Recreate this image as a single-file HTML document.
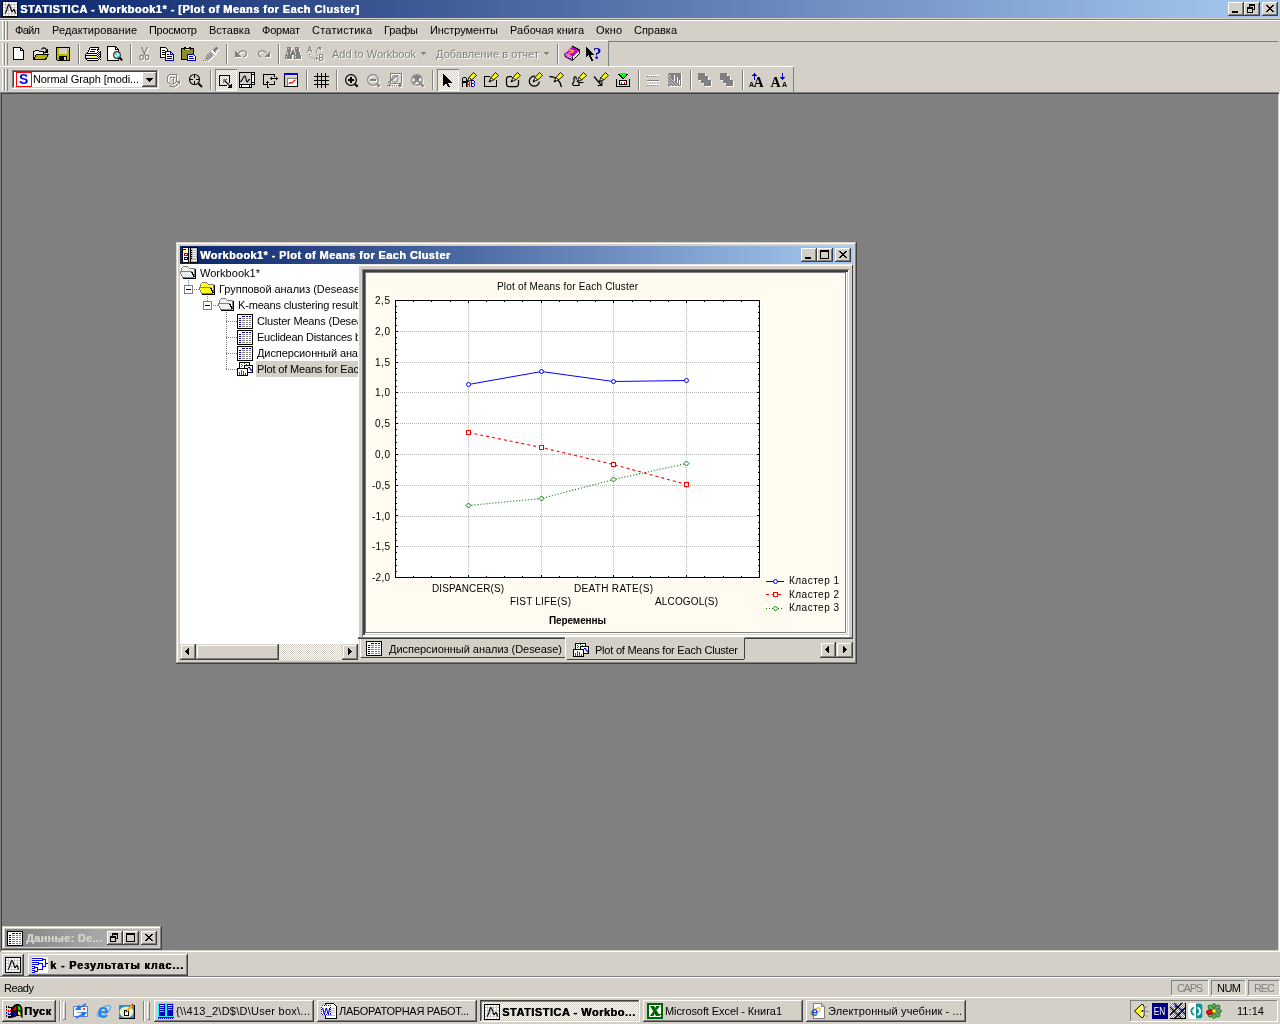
<!DOCTYPE html>
<html><head><meta charset="utf-8"><title>STATISTICA</title>
<style>
*{box-sizing:border-box;margin:0;padding:0}
html,body{width:1280px;height:1024px;overflow:hidden;background:#808080;font-family:"Liberation Sans",sans-serif;font-size:11px;color:#000}
.a{position:absolute}
.t{position:absolute;white-space:nowrap;will-change:transform}
.f{position:absolute;background:#d4d0c8}
.btn{position:absolute;background:#d4d0c8;box-shadow:inset -1px -1px #404040,inset 1px 1px #fff,inset -2px -2px #808080,inset 2px 2px #d4d0c8}
.pbtn{position:absolute;background:#fff;box-shadow:inset -1px -1px #fff,inset 1px 1px #404040,inset -2px -2px #d4d0c8,inset 2px 2px #808080}
.cb{position:absolute;background:#d4d0c8;box-shadow:inset -1px -1px #404040,inset 1px 1px #d4d0c8,inset -2px -2px #808080,inset 2px 2px #fff}
.sunk2{position:absolute;box-shadow:inset -1px -1px #fff,inset 1px 1px #808080,inset -2px -2px #d4d0c8,inset 2px 2px #404040}
.sunk1{position:absolute;box-shadow:inset -1px -1px #fff,inset 1px 1px #808080}
.rais1{position:absolute;box-shadow:inset -1px -1px #808080,inset 1px 1px #fff}
.sep{position:absolute;width:2px;border-left:1px solid #808080;border-right:1px solid #fff}
.grip{position:absolute;width:3px;border-left:1px solid #fff;border-right:1px solid #808080}
.chk{background-image:conic-gradient(#fff 25%,#d4d0c8 0 50%,#fff 0 75%,#d4d0c8 0);background-size:2px 2px}
svg{position:absolute;overflow:visible}
svg text{will-change:transform}
</style></head><body>
<svg style="left:0;top:0" width="0" height="0"><defs><pattern id="yd" width="2" height="2" patternUnits="userSpaceOnUse"><rect width="2" height="2" fill="#fff"/><rect width="1" height="1" fill="#ff0"/><rect x="1" y="1" width="1" height="1" fill="#ff0"/></pattern><pattern id="bw" width="2" height="2" patternUnits="userSpaceOnUse"><rect width="2" height="2" fill="#fff"/><rect width="1" height="1" fill="#000"/><rect x="1" y="1" width="1" height="1" fill="#000"/></pattern><pattern id="ckp" width="2" height="2" patternUnits="userSpaceOnUse"><rect width="1" height="1" fill="#808080"/><rect x="1" y="1" width="1" height="1" fill="#808080"/></pattern></defs></svg><div class="a" style="left:0px;top:0px;width:1280px;height:18px;background:linear-gradient(90deg,#0a246a,#a6caf0)"></div><svg style="left:2px;top:1px" width="16" height="16" viewBox="0 0 16 16" shape-rendering="crispEdges"><rect x="0" y="0" width="16" height="16" fill="#000"/><rect x="1" y="1" width="14" height="14" fill="#fff"/><rect x="1" y="3" width="14" height="1" fill="#c8c8c8"/><rect x="1" y="6" width="14" height="1" fill="#c8c8c8"/><rect x="1" y="9" width="14" height="1" fill="#c8c8c8"/><rect x="1" y="12" width="14" height="1" fill="#c8c8c8"/><rect x="3" y="1" width="1" height="14" fill="#c8c8c8"/><rect x="6" y="1" width="1" height="14" fill="#c8c8c8"/><rect x="9" y="1" width="1" height="14" fill="#c8c8c8"/><rect x="12" y="1" width="1" height="14" fill="#c8c8c8"/><g shape-rendering="auto"><path d="M3 12.5L4.5 10 6 4.5 7 3.5 8 5 9.5 10 10.5 10.5 11.5 8.5 12.5 9 13.5 12.5" stroke="#000" stroke-width="1.1" fill="none" /></g></svg><div class="t" style="left:20px;top:2px;font-size:11px;line-height:14px;height:14px;color:#fff;font-weight:bold;text-shadow:.45px 0 0 currentColor;letter-spacing:0.454px;">STATISTICA - Workbook1* - [Plot of Means for Each Cluster]</div><div class="btn" style="left:1228px;top:2px;width:16px;height:14px"><svg style="left:0;top:0" width="16" height="14" shape-rendering="crispEdges"><rect x="4" y="9" width="6" height="2"/></svg></div><div class="btn" style="left:1244px;top:2px;width:16px;height:14px"><svg style="left:0;top:0" width="16" height="14" shape-rendering="crispEdges"><path d="M5 2h6v6h-2v-1h1v-3h-4v1h-1z M3 5h6v6h-6z M4 7v3h4v-3z" fill-rule="evenodd"/></svg></div><div class="btn" style="left:1262px;top:2px;width:16px;height:14px"><svg style="left:0;top:0" width="16" height="14" shape-rendering="crispEdges"><path d="M4 3h2v1h1v1h2v-1h1v-1h2v1h-1v1h-1v1h-1v1h1v1h1v1h1v1h-2v-1h-1v-1h-2v1h-1v1h-2v-1h1v-1h1v-1h1v-1h-1v-1h-1v-1h-1z"/></svg></div><div class="f" style="left:0px;top:18px;width:1280px;height:74px;"></div><div class="a" style="left:0px;top:19px;width:1280px;height:1px;background:#808080"></div><div class="a" style="left:0px;top:20px;width:1280px;height:1px;background:#fff"></div><div class="grip" style="left:2px;top:21px;height:19px"></div><div class="grip" style="left:5px;top:21px;height:19px"></div><div class="t" style="left:15px;top:24px;font-size:11px;line-height:13px;height:13px;letter-spacing:-0.682px;">Файл</div><div class="t" style="left:52px;top:24px;font-size:11px;line-height:13px;height:13px;letter-spacing:0.093px;">Редактирование</div><div class="t" style="left:149px;top:24px;font-size:11px;line-height:13px;height:13px;letter-spacing:-0.321px;">Просмотр</div><div class="t" style="left:209px;top:24px;font-size:11px;line-height:13px;height:13px;letter-spacing:0.018px;">Вставка</div><div class="t" style="left:262px;top:24px;font-size:11px;line-height:13px;height:13px;letter-spacing:-0.216px;">Формат</div><div class="t" style="left:312px;top:24px;font-size:11px;line-height:13px;height:13px;letter-spacing:0.247px;">Статистика</div><div class="t" style="left:384px;top:24px;font-size:11px;line-height:13px;height:13px;letter-spacing:-0.133px;">Графы</div><div class="t" style="left:430px;top:24px;font-size:11px;line-height:13px;height:13px;letter-spacing:-0.059px;">Инструменты</div><div class="t" style="left:510px;top:24px;font-size:11px;line-height:13px;height:13px;letter-spacing:0.079px;">Рабочая книга</div><div class="t" style="left:596px;top:24px;font-size:11px;line-height:13px;height:13px;letter-spacing:0.146px;">Окно</div><div class="t" style="left:634px;top:24px;font-size:11px;line-height:13px;height:13px;letter-spacing:-0.026px;">Справка</div><div class="a" style="left:0px;top:40px;width:608px;height:1px;background:#fff"></div><div class="a" style="left:608px;top:41px;width:670px;height:1px;background:#808080"></div><div class="a" style="left:608px;top:41px;width:1px;height:25px;background:#808080"></div><div class="grip" style="left:2px;top:43px;height:22px"></div><div class="grip" style="left:5px;top:43px;height:22px"></div><svg style="left:11px;top:46px" width="16" height="16" viewBox="0 0 16 16" shape-rendering="crispEdges"><path d="M2.5 1.5H9.5L12.5 4.5V13.5H2.5Z" stroke="#000" stroke-width="1" fill="#fff" /><path d="M9.5 1.5V4.5H12.5" stroke="#000" stroke-width="1" fill="none" /></svg><svg style="left:33px;top:46px" width="16" height="16" viewBox="0 0 16 16" shape-rendering="crispEdges"><path d="M.5 13.5V5.5H1.5L2.5 4.5H5.5L6.5 5.5H10.5V8" stroke="#000" stroke-width="1" fill="url(#yd)" /><path d="M.5 13.5L3.5 8.5H15.5L12.5 13.5Z" stroke="#000" stroke-width="1" fill="#b4b400" /><g shape-rendering="auto"><path d="M8.5 3.5C9.5 1.300 12.500 1.300 13.500 4" stroke="#000" stroke-width="1.1" fill="none" /></g><path d="M15 2.500v4h-4z" fill="#000"/></svg><svg style="left:55px;top:46px" width="16" height="16" viewBox="0 0 16 16" shape-rendering="crispEdges"><rect x="1" y="1" width="14" height="14" fill="#000"/><rect x="2" y="2" width="12" height="12" fill="#b8b800"/><rect x="4" y="2" width="8" height="6" fill="#d4d0c8"/><rect x="4" y="10" width="8" height="4" fill="#000"/><rect x="9" y="11" width="2" height="3" fill="#d4d0c8"/><rect x="13" y="2" width="1" height="1" fill="#fff"/><rect x="1" y="14" width="1" height="1" fill="#d4d0c8"/></svg><div class="sep" style="left:78px;top:44px;height:20px"></div><svg style="left:85px;top:46px" width="16" height="16" viewBox="0 0 16 16" shape-rendering="crispEdges"><path d="M5 2h8l-1 5h-9z" fill="#fff"/><rect x="5" y="1" width="9" height="1" fill="#000"/><rect x="4" y="2" width="1" height="2" fill="#000"/><rect x="3" y="4" width="1" height="2" fill="#000"/><rect x="2" y="6" width="1" height="1" fill="#000"/><rect x="13" y="1" width="1" height="3" fill="#000"/><rect x="12" y="3" width="1" height="3" fill="#000"/><rect x="6" y="3" width="5" height="1" fill="#000"/><rect x="5" y="5" width="5" height="1" fill="#000"/><rect x="1" y="7" width="11" height="1" fill="#000"/><rect x="0" y="8" width="1" height="5" fill="#000"/><rect x="1" y="8" width="11" height="1" fill="#fff"/><rect x="1" y="9" width="11" height="1" fill="#000"/><rect x="1" y="10" width="11" height="2" fill="#eceae6"/><rect x="7" y="10" width="3" height="2" fill="#ff0"/><rect x="1" y="12" width="11" height="1" fill="#000"/><rect x="2" y="13" width="10" height="1" fill="#fff"/><rect x="1" y="13" width="1" height="1" fill="#000"/><rect x="2" y="14" width="10" height="1" fill="#000"/><rect x="12" y="5" width="4" height="9" fill="url(#bw)"/><rect x="12" y="14" width="1" height="1" fill="#000"/><rect x="15" y="6" width="1" height="6" fill="#000"/></svg><svg style="left:107px;top:46px" width="16" height="16" viewBox="0 0 16 16" shape-rendering="crispEdges"><path d="M.5 .5H8.5L11.5 3.5V14.5H.5Z" stroke="#000" stroke-width="1" fill="#fff" /><path d="M8.5 .5V3.5H11.5" stroke="#000" stroke-width="1" fill="none" /><g shape-rendering="auto"><circle cx="10" cy="9" r="3.300" fill="#ece4e4" stroke="#303030" stroke-width="1.200"/><path d="M12.500 11.500L15.200 14.400" stroke="#000" stroke-width="2" fill="none" /></g><rect x="8" y="7" width="2" height="2" fill="#0ff"/><rect x="10" y="10" width="2" height="1" fill="#0ff"/></svg><div class="sep" style="left:130px;top:44px;height:20px"></div><svg style="left:137px;top:46px" width="16" height="16" viewBox="0 0 16 16" shape-rendering="crispEdges"><g transform="translate(1,1)"><g shape-rendering="auto"><path d="M4.5 1L8.5 9.5M10.5 1L6.5 9.5" stroke="#fff" stroke-width="1.2" fill="none" /><ellipse cx="4.5" cy="11.5" rx="1.8" ry="2.2" fill="none" stroke="#fff" stroke-width="1.1"/><ellipse cx="10" cy="11.5" rx="1.8" ry="2.2" fill="none" stroke="#fff" stroke-width="1.1"/></g></g><g shape-rendering="auto"><path d="M4.5 1L8.5 9.5M10.5 1L6.5 9.5" stroke="#808080" stroke-width="1.2" fill="none" /><ellipse cx="4.5" cy="11.5" rx="1.8" ry="2.2" fill="none" stroke="#808080" stroke-width="1.1"/><ellipse cx="10" cy="11.5" rx="1.8" ry="2.2" fill="none" stroke="#808080" stroke-width="1.1"/></g></svg><svg style="left:159px;top:46px" width="16" height="16" viewBox="0 0 16 16" shape-rendering="crispEdges"><path d="M1.5 1.5H6.5L8.5 3.5V11.5H1.5Z" stroke="#000" stroke-width="1" fill="#fff" /><rect x="3" y="4" width="3" height="1" fill="#000"/><rect x="3" y="6" width="4" height="1" fill="#000"/><rect x="3" y="8" width="4" height="1" fill="#000"/><path d="M6.5 5.5H11.5L14.5 8.5V14.5H6.5Z" stroke="#0000c0" stroke-width="1" fill="#fff" /><path d="M11.5 5.5V8.5H14.5" stroke="#0000c0" stroke-width="1" fill="none" /><rect x="8" y="8" width="2" height="1" fill="#000"/><rect x="8" y="10" width="5" height="1" fill="#000"/><rect x="8" y="12" width="5" height="1" fill="#000"/></svg><svg style="left:181px;top:46px" width="16" height="16" viewBox="0 0 16 16" shape-rendering="crispEdges"><rect x="0" y="2" width="13" height="12" fill="#000"/><rect x="1" y="3" width="11" height="10" fill="#8c8c28"/><rect x="3" y="1" width="7" height="3" fill="#000"/><rect x="5" y="1" width="3" height="1" fill="#ff0"/><rect x="4" y="3" width="5" height="1" fill="#d4d0c8"/><path d="M6.5 8.5H12.5L14.5 10.5V14.5H6.5Z" stroke="#0000c0" stroke-width="1" fill="#fff" /><rect x="8" y="10" width="4" height="1" fill="#0000c0"/><rect x="8" y="12" width="5" height="1" fill="#0000c0"/></svg><svg style="left:203px;top:46px" width="16" height="16" viewBox="0 0 16 16" shape-rendering="crispEdges"><g transform="translate(1,1)"><g shape-rendering="auto"><path d="M14.5 1.5L11 5" stroke="#fff" stroke-width="3" fill="none" /><path d="M9.5 3.5l3.5 3.5-1.5 1.5-3.5-3.500z" fill="#fff"/><path d="M9.5 3.500l3.5 3.5" stroke="#fff" stroke-width="1" fill="none" /><path d="M7.5 5.500l3.5 3.5-5 5-1-1-3 1.5 1.5-3-1-1z" fill="#fff"/><path d="M5 8l3.5 3.500M6.5 6.500l3.5 3.500M3.5 9.500l3 3" stroke="#fff" stroke-width="0.7" fill="none" /></g><rect x="0" y="14" width="1" height="1" fill="#fff"/><rect x="2" y="14" width="1" height="1" fill="#fff"/><rect x="4" y="14" width="1" height="1" fill="#fff"/></g><g shape-rendering="auto"><path d="M14.5 1.5L11 5" stroke="#808080" stroke-width="3" fill="none" /><path d="M9.5 3.5l3.5 3.5-1.5 1.5-3.5-3.500z" fill="#fff"/><path d="M9.5 3.500l3.5 3.5" stroke="#808080" stroke-width="1" fill="none" /><path d="M7.5 5.500l3.5 3.5-5 5-1-1-3 1.5 1.5-3-1-1z" fill="#808080"/><path d="M5 8l3.5 3.500M6.5 6.500l3.5 3.500M3.5 9.500l3 3" stroke="#fff" stroke-width="0.7" fill="none" /></g><rect x="0" y="14" width="1" height="1" fill="#808080"/><rect x="2" y="14" width="1" height="1" fill="#808080"/><rect x="4" y="14" width="1" height="1" fill="#808080"/></svg><div class="sep" style="left:226px;top:44px;height:20px"></div><svg style="left:233px;top:46px" width="16" height="16" viewBox="0 0 16 16" shape-rendering="crispEdges"><g transform="translate(1,1)"><path d="M2 5v6h6z" fill="#fff"/><g shape-rendering="auto"><path d="M5.5 7.5C7 4.5 11 4 13 6 14.5 8 13 10.5 10.5 11" stroke="#fff" stroke-width="1.1" fill="none" /></g></g><path d="M2 5v6h6z" fill="#808080"/><g shape-rendering="auto"><path d="M5.5 7.5C7 4.5 11 4 13 6 14.5 8 13 10.5 10.5 11" stroke="#808080" stroke-width="1.1" fill="none" /></g></svg><svg style="left:255px;top:46px" width="16" height="16" viewBox="0 0 16 16" shape-rendering="crispEdges"><g transform="translate(1,1)"><path d="M15 5v6h-6z" fill="#fff"/><g shape-rendering="auto"><path d="M11.5 7.5C10 4.5 6 4 4 6 2.5 8 4 10.5 6.5 11" stroke="#fff" stroke-width="1.1" fill="none" /></g></g><path d="M15 5v6h-6z" fill="#808080"/><g shape-rendering="auto"><path d="M11.5 7.5C10 4.5 6 4 4 6 2.5 8 4 10.5 6.5 11" stroke="#808080" stroke-width="1.1" fill="none" /></g></svg><div class="sep" style="left:278px;top:44px;height:20px"></div><svg style="left:285px;top:46px" width="16" height="16" viewBox="0 0 16 16" shape-rendering="crispEdges"><g transform="translate(1,1)"><rect x="2" y="1" width="4" height="5" fill="#fff"/><rect x="1" y="6" width="6" height="3" fill="#fff"/><rect x="0" y="9" width="7" height="4" fill="#fff"/><rect x="10" y="1" width="4" height="5" fill="#fff"/><rect x="9" y="6" width="6" height="3" fill="#fff"/><rect x="9" y="9" width="7" height="4" fill="#fff"/><rect x="7" y="4" width="2" height="5" fill="#fff"/></g><rect x="2" y="1" width="4" height="5" fill="#808080"/><rect x="1" y="6" width="6" height="3" fill="#808080"/><rect x="0" y="9" width="7" height="4" fill="#808080"/><rect x="10" y="1" width="4" height="5" fill="#808080"/><rect x="9" y="6" width="6" height="3" fill="#808080"/><rect x="9" y="9" width="7" height="4" fill="#808080"/><rect x="7" y="4" width="2" height="5" fill="#808080"/><rect x="3" y="2" width="1" height="1" fill="#d4d0c8"/><rect x="11" y="2" width="1" height="1" fill="#d4d0c8"/><rect x="2" y="6" width="1" height="3" fill="#d4d0c8"/><rect x="10" y="6" width="1" height="3" fill="#d4d0c8"/><rect x="1" y="10" width="1" height="2" fill="#d4d0c8"/><rect x="10" y="10" width="1" height="2" fill="#d4d0c8"/><rect x="5" y="6" width="1" height="2" fill="#d4d0c8"/></svg><svg style="left:307px;top:46px" width="16" height="16" viewBox="0 0 16 16" shape-rendering="crispEdges"><g transform="translate(1,1)"><g shape-rendering="auto"><path d="M.5 6.5L2.7 .5 5 6.5M1.3 4.500h2.9" stroke="#fff" stroke-width="1" fill="none" /><path d="M12.5 8.5v6h2.200a1.4 1.4 0 000-3H12.500m2 0a1.3 1.3 0 000-3H12.5" stroke="#fff" stroke-width="1" fill="none" /><path d="M2.5 8C3 11.5 5.5 13 8 12.5" stroke="#fff" stroke-width="1.2" fill="none" stroke-dasharray="1 1.2"/><path d="M10.5 9.500C8.5 6.5 9.5 3.5 12 2" stroke="#fff" stroke-width="1.2" fill="none" stroke-dasharray="1 1.2"/></g><path d="M8.5 10l3 2.5-3 2.500z" fill="#fff"/><path d="M10 .5h4v4z" fill="#fff"/></g><g shape-rendering="auto"><path d="M.5 6.5L2.7 .5 5 6.5M1.3 4.500h2.9" stroke="#808080" stroke-width="1" fill="none" /><path d="M12.5 8.5v6h2.200a1.4 1.4 0 000-3H12.500m2 0a1.3 1.3 0 000-3H12.5" stroke="#808080" stroke-width="1" fill="none" /><path d="M2.5 8C3 11.5 5.5 13 8 12.5" stroke="#808080" stroke-width="1.2" fill="none" stroke-dasharray="1 1.2"/><path d="M10.5 9.500C8.5 6.5 9.5 3.5 12 2" stroke="#808080" stroke-width="1.2" fill="none" stroke-dasharray="1 1.2"/></g><path d="M8.5 10l3 2.5-3 2.500z" fill="#808080"/><path d="M10 .5h4v4z" fill="#808080"/></svg><div class="t" style="left:332px;top:48px;font-size:11px;line-height:13px;height:13px;color:#808080;letter-spacing:-0.013px;text-shadow:1px 1px #fff;">Add to Workbook</div><svg style="left:421px;top:52px" width="7" height="4" shape-rendering="crispEdges"><path d="M0 0h5l-2.5 3z" fill="#808080"/></svg><div class="t" style="left:436px;top:48px;font-size:11px;line-height:13px;height:13px;color:#808080;letter-spacing:0.075px;text-shadow:1px 1px #fff;">Добавление в отчет</div><svg style="left:544px;top:52px" width="7" height="4" shape-rendering="crispEdges"><path d="M0 0h5l-2.5 3z" fill="#808080"/></svg><div class="sep" style="left:557px;top:44px;height:20px"></div><svg style="left:564px;top:46px" width="16" height="16" viewBox="0 0 16 16" shape-rendering="crispEdges"><g shape-rendering="auto"><path d="M1 7L8.400 10.600V14.500L1 10.500z" fill="#fff"/><path d="M1 8.200l7.400 3.600M1 9.800l7.400 3.600" stroke="#d000d0" stroke-width="0.9" fill="none" /><path d="M8.400 10.600L15.500 4V7.500L8.400 14.500z" stroke="#000" stroke-width="1" fill="#fff" /><path d="M1 7v3.500l7.400 4" stroke="#000" stroke-width="1" fill="none" /><path d="M8 0L15.500 4 8.400 10.600 1 7z" fill="#d000d0"/><path d="M8 0L15.500 4" stroke="#000" stroke-width="1.3" fill="none" /><path d="M1.800 6.300L8 .8" stroke="#fff" stroke-width="1" fill="none" stroke-dasharray="1 .7"/></g><text x="6.200" y="9.500" font-family="Liberation Sans" font-weight="bold" font-size="9" fill="#ff0" shape-rendering="auto" transform="rotate(20 8 6) skewX(-20)">?</text></svg><svg style="left:586px;top:46px" width="16" height="16" viewBox="0 0 16 16" shape-rendering="crispEdges"><path d="M0 1v10.500l2.500-2.500 2.500 5.500h2l-2.500-5.500h3.500z" fill="#000"/><text x="7" y="13" font-family="Liberation Serif" font-weight="bold" font-size="17" fill="#0000c0" shape-rendering="auto">?</text></svg><div class="a" style="left:0px;top:66px;width:794px;height:1px;background:#fff"></div><div class="a" style="left:793px;top:67px;width:1px;height:25px;background:#808080"></div><div class="grip" style="left:2px;top:69px;height:22px"></div><div class="grip" style="left:5px;top:69px;height:22px"></div><div class="sunk2" style="left:12px;top:70px;width:147px;height:19px;background:#fff"></div><div class="a" style="left:16px;top:72px;width:16px;height:15px;border:1px solid #f00;background:#fff"></div><div class="t" style="left:19px;top:71px;font-size:14px;line-height:16px;height:16px;color:#00f;font-weight:bold;letter-spacing:-0.344px;/*nosh*/">S</div><div class="t" style="left:33px;top:73px;font-size:11px;line-height:13px;height:13px;letter-spacing:-0.110px;">Normal Graph [modi...</div><div class="btn" style="left:142px;top:72px;width:15px;height:15px;"></div><svg style="left:146px;top:78px" width="7" height="4" shape-rendering="crispEdges"><path d="M0 0h7l-3.5 4z" fill="#000"/></svg><svg style="left:165px;top:72px" width="16" height="16" viewBox="0 0 16 16" shape-rendering="crispEdges"><g transform="translate(1,1)"><path d="M4 2.5h8M2.5 3.5v6.5M11.5 3v6.5M2.5 3.5h1.5M5 5.5h2M7.5 5.5h2M8.5 6v6" stroke="#fff" stroke-width="1" fill="none" /><g shape-rendering="auto"><path d="M2.5 10l5 3M11.5 9.5l-3 3" stroke="#fff" stroke-width="1" fill="none" /><path d="M4.5 13.5c3 2.5 6.5 1.5 8.5-2" stroke="#fff" stroke-width="1.1" fill="none" /></g><path d="M11 9h3.500v3.500z" fill="#fff"/></g><path d="M4 2.5h8M2.5 3.5v6.5M11.5 3v6.5M2.5 3.5h1.5M5 5.5h2M7.5 5.5h2M8.5 6v6" stroke="#808080" stroke-width="1" fill="none" /><g shape-rendering="auto"><path d="M2.5 10l5 3M11.5 9.5l-3 3" stroke="#808080" stroke-width="1" fill="none" /><path d="M4.5 13.5c3 2.5 6.5 1.5 8.5-2" stroke="#808080" stroke-width="1.1" fill="none" /></g><path d="M11 9h3.500v3.500z" fill="#808080"/></svg><svg style="left:187px;top:72px" width="16" height="16" viewBox="0 0 16 16" shape-rendering="crispEdges"><g shape-rendering="auto"><circle cx="7.5" cy="7.5" r="5" fill="none" stroke="#000" stroke-width="1.1"/><path d="M11.5 11.500L15 15" stroke="#000" stroke-width="1.9" fill="none" /></g><rect x="7" y="2" width="1" height="4" fill="#000"/><rect x="7" y="9" width="1" height="4" fill="#000"/><rect x="2" y="7" width="4" height="1" fill="#000"/><rect x="9" y="7" width="4" height="1" fill="#000"/></svg><div class="sep" style="left:210px;top:70px;height:20px"></div><div class="a chk" style="left:215px;top:69px;width:22px;height:22px;box-shadow:inset 1px 1px #808080,inset -1px -1px #fff"></div><svg style="left:218px;top:73px" width="16" height="16" viewBox="0 0 16 16" shape-rendering="crispEdges"><rect x="1" y="2" width="11" height="1" fill="#000"/><rect x="1" y="2" width="1" height="11" fill="#000"/><rect x="1" y="12" width="8" height="1" fill="#000"/><rect x="11" y="2" width="1" height="8" fill="#000"/><path d="M5 6h4l-4 4z" fill="#808080"/><g shape-rendering="auto"><path d="M7 8l5 5" stroke="#000" stroke-width="1.1" fill="none" /></g><path d="M14 15h-5l5-5z" fill="#000"/></svg><svg style="left:239px;top:72px" width="16" height="16" viewBox="0 0 16 16" shape-rendering="crispEdges"><rect x="0" y="0" width="13" height="16" fill="#000"/><rect x="12" y="0" width="4" height="13" fill="#000"/><rect x="1" y="1" width="11" height="11" fill="#d4d0c8"/><rect x="13" y="1" width="2" height="1" fill="#fff"/><rect x="13" y="3" width="2" height="7" fill="#fff"/><rect x="13" y="11" width="2" height="1" fill="#fff"/><rect x="1" y="13" width="1" height="2" fill="#fff"/><rect x="3" y="13" width="7" height="2" fill="#fff"/><rect x="11" y="13" width="1" height="2" fill="#fff"/><g shape-rendering="auto"><path d="M1 9.5L2.5 9 4.5 5 5.5 4 6.500 4.500 7.500 9.500 8.500 10 9.500 8 11 7.500" stroke="#000" stroke-width="1.1" fill="none" /></g></svg><svg style="left:261px;top:72px" width="16" height="16" viewBox="0 0 16 16" shape-rendering="crispEdges"><path d="M11 2.5h-8.500v10h3M8 12.500h5.500v-4M13.5 5v-2.500h-2.5" stroke="#000" stroke-width="1.2" fill="none" /><path d="M10 6.500h6M6.5 10v6" stroke="#000" stroke-width="1" fill="none" /><path d="M9 6.500l2-2v4zM16.5 6.500l-2-2v4zM6.5 9l-2 2h4zM6.5 16.500l-2-2h4z" fill="#000"/></svg><svg style="left:283px;top:72px" width="16" height="16" viewBox="0 0 16 16" shape-rendering="crispEdges"><rect x="1" y="1" width="14" height="14" fill="#000"/><rect x="1" y="1" width="14" height="2" fill="#00f"/><rect x="2" y="3" width="12" height="11" fill="#d4d0c8"/><rect x="2" y="3" width="12" height="1" fill="#f4f0dc"/><rect x="4" y="6" width="10" height="1" fill="#808080"/><rect x="4" y="6" width="1" height="8" fill="#808080"/><rect x="5" y="7" width="9" height="7" fill="#fff"/><g shape-rendering="auto"><path d="M6 12c1-2.5 1.5-1 3-1.200s1.5-2.5 3.5-3" stroke="#f00" stroke-width="1.3" fill="none" /></g></svg><div class="sep" style="left:306px;top:70px;height:20px"></div><svg style="left:313px;top:72px" width="16" height="16" viewBox="0 0 16 16" shape-rendering="crispEdges"><rect x="4" y="1" width="1" height="15" fill="#000"/><rect x="8" y="1" width="1" height="15" fill="#000"/><rect x="12" y="1" width="1" height="15" fill="#000"/><rect x="1" y="4" width="15" height="1" fill="#000"/><rect x="1" y="8" width="15" height="1" fill="#000"/><rect x="1" y="12" width="15" height="1" fill="#000"/></svg><div class="sep" style="left:336px;top:70px;height:20px"></div><svg style="left:343px;top:72px" width="16" height="16" viewBox="0 0 16 16" shape-rendering="crispEdges"><g shape-rendering="auto"><circle cx="8" cy="8" r="5.4" fill="none" stroke="#000" stroke-width="1.2"/><path d="M12 12l2.6 2.600" stroke="#000" stroke-width="2.2" fill="none" /></g><rect x="5" y="7" width="6" height="2" fill="#000"/><rect x="7" y="5" width="2" height="6" fill="#000"/></svg><svg style="left:365px;top:72px" width="16" height="16" viewBox="0 0 16 16" shape-rendering="crispEdges"><g transform="translate(1,1)"><g shape-rendering="auto"><circle cx="8" cy="8" r="5.4" fill="none" stroke="#fff" stroke-width="1.2"/><path d="M12 12l2.6 2.600" stroke="#fff" stroke-width="2.2" fill="none" /></g><rect x="5" y="7" width="6" height="2" fill="#fff"/></g><g shape-rendering="auto"><circle cx="8" cy="8" r="5.4" fill="none" stroke="#808080" stroke-width="1.2"/><path d="M12 12l2.6 2.600" stroke="#808080" stroke-width="2.2" fill="none" /></g><rect x="5" y="7" width="6" height="2" fill="#808080"/></svg><svg style="left:387px;top:72px" width="16" height="16" viewBox="0 0 16 16" shape-rendering="crispEdges"><g transform="translate(1,1)"><path d="M3.5 1.5h11v10h-11z" stroke="#fff" stroke-width="1" fill="none" /><g shape-rendering="auto"><path d="M1 11L11 3" stroke="#fff" stroke-width="1.2" fill="none" /><circle cx="8" cy="7" r="3.3" fill="none" stroke="#fff"/></g><path d="M1 13.5h12" stroke="#fff" stroke-width="1" fill="none" stroke-dasharray="1 1"/><path d="M0 13.5l3-2v4z" fill="#fff"/><path d="M15 13.5l-3-2v4z" fill="#fff"/></g><path d="M3.5 1.5h11v10h-11z" stroke="#808080" stroke-width="1" fill="none" /><g shape-rendering="auto"><path d="M1 11L11 3" stroke="#808080" stroke-width="1.2" fill="none" /><circle cx="8" cy="7" r="3.3" fill="none" stroke="#808080"/></g><path d="M1 13.5h12" stroke="#808080" stroke-width="1" fill="none" stroke-dasharray="1 1"/><path d="M0 13.5l3-2v4z" fill="#808080"/><path d="M15 13.5l-3-2v4z" fill="#808080"/></svg><svg style="left:409px;top:72px" width="16" height="16" viewBox="0 0 16 16" shape-rendering="crispEdges"><g transform="translate(1,1)"><g shape-rendering="auto"><circle cx="8" cy="8" r="5.4" fill="none" stroke="#fff" stroke-width="1.2"/><path d="M12 12l2.6 2.600" stroke="#fff" stroke-width="2.2" fill="none" /></g><g shape-rendering="auto"><path d="M4.5 4.500l7 7M11.500 4.500l-7 7" stroke="#fff" stroke-width="1.8" fill="none" /><path d="M4.500 5l3.500-2.200 3.500 2.200-3.500 3z" fill="#fff"/></g></g><g shape-rendering="auto"><circle cx="8" cy="8" r="5.4" fill="none" stroke="#808080" stroke-width="1.2"/><path d="M12 12l2.6 2.600" stroke="#808080" stroke-width="2.2" fill="none" /></g><g shape-rendering="auto"><path d="M4.5 4.500l7 7M11.500 4.500l-7 7" stroke="#808080" stroke-width="1.8" fill="none" /><path d="M4.500 5l3.500-2.200 3.500 2.200-3.500 3z" fill="#808080"/></g></svg><div class="sep" style="left:432px;top:70px;height:20px"></div><div class="a chk" style="left:437px;top:69px;width:22px;height:22px;box-shadow:inset 1px 1px #808080,inset -1px -1px #fff"></div><svg style="left:440px;top:73px" width="16" height="16" viewBox="0 0 16 16" shape-rendering="crispEdges"><path d="M3 1v12l3-3 2 4.500 1.800-.8-2-4.200h4z" fill="#000"/></svg><svg style="left:461px;top:72px" width="16" height="16" viewBox="0 0 16 16" shape-rendering="crispEdges"><path d="M1.5 15V6.5L2.5 5.5h2L5.5 6.5V15" stroke="#000" stroke-width="1" fill="none" /><rect x="2" y="9" width="3" height="2" fill="#000"/><rect x="1" y="6" width="1" height="9" fill="#000"/><rect x="5" y="6" width="1" height="9" fill="#000"/><path d="M6.5 10v5M8.5 10v5" stroke="#f00" stroke-width="1" fill="none" /><rect x="7" y="12" width="1" height="1" fill="#f00"/><rect x="10" y="8" width="1" height="7" fill="#00f"/><rect x="11" y="8" width="2" height="1" fill="#00f"/><rect x="11" y="11" width="2" height="1" fill="#00f"/><rect x="11" y="14" width="2" height="1" fill="#00f"/><rect x="13" y="9" width="1" height="2" fill="#00f"/><rect x="13" y="12" width="1" height="2" fill="#00f"/><rect x="11" y="9" width="2" height="2" fill="#ffc"/><rect x="11" y="12" width="2" height="2" fill="#ffc"/><g shape-rendering="auto"><path d="M12.5 .5l3 3-5 4.5-2.5-2.5z" stroke="#000" stroke-width="0.9" fill="#ff0" /><path d="M8 5.5l2.5 2.5-3.2 1.3-.6-.6z" stroke="#000" stroke-width="0.9" fill="#fff" /><path d="M7.6 8.4l-1.6 1.6" stroke="#000" stroke-width="1.5" fill="none" /></g></svg><svg style="left:483px;top:72px" width="16" height="16" viewBox="0 0 16 16" shape-rendering="crispEdges"><path d="M7 4.5h-5.5v10h12v-7" stroke="#000" stroke-width="1.2" fill="none" /><g shape-rendering="auto"><path d="M12.5 .5l3 3-5 4.5-2.5-2.5z" stroke="#000" stroke-width="0.9" fill="#ff0" /><path d="M8 5.5l2.5 2.5-3.2 1.3-.6-.6z" stroke="#000" stroke-width="0.9" fill="#fff" /><path d="M7.6 8.4l-1.6 1.6" stroke="#000" stroke-width="1.5" fill="none" /></g></svg><svg style="left:505px;top:72px" width="16" height="16" viewBox="0 0 16 16" shape-rendering="crispEdges"><g shape-rendering="auto"><path d="M7 4.5H4a2.5 2.5 0 00-2.5 2.5v5a2.5 2.5 0 002.5 2.5h7a2.5 2.5 0 002.5-2.5V8" stroke="#000" stroke-width="1.25" fill="none" /></g><g shape-rendering="auto"><path d="M12.5 .5l3 3-5 4.5-2.5-2.5z" stroke="#000" stroke-width="0.9" fill="#ff0" /><path d="M8 5.5l2.5 2.5-3.2 1.3-.6-.6z" stroke="#000" stroke-width="0.9" fill="#fff" /><path d="M7.6 8.4l-1.6 1.6" stroke="#000" stroke-width="1.5" fill="none" /></g></svg><svg style="left:527px;top:72px" width="16" height="16" viewBox="0 0 16 16" shape-rendering="crispEdges"><g shape-rendering="auto"><path d="M8 4.2A5 5 0 1012.3 9.5" stroke="#000" stroke-width="1.3" fill="none" /></g><g shape-rendering="auto"><path d="M12.5 .5l3 3-5 4.5-2.5-2.5z" stroke="#000" stroke-width="0.9" fill="#ff0" /><path d="M8 5.5l2.5 2.5-3.2 1.3-.6-.6z" stroke="#000" stroke-width="0.9" fill="#fff" /><path d="M7.6 8.4l-1.6 1.6" stroke="#000" stroke-width="1.5" fill="none" /></g></svg><svg style="left:549px;top:72px" width="16" height="16" viewBox="0 0 16 16" shape-rendering="crispEdges"><g shape-rendering="auto"><path d="M.5 4.500C6 4.5 11 8 12.5 15" stroke="#000" stroke-width="1.4" fill="none" /></g><g transform="translate(-1,0)"><g shape-rendering="auto"><path d="M12.5 .5l3 3-5 4.5-2.5-2.5z" stroke="#000" stroke-width="0.9" fill="#ff0" /><path d="M8 5.5l2.5 2.5-3.2 1.3-.6-.6z" stroke="#000" stroke-width="0.9" fill="#fff" /><path d="M7.6 8.4l-1.6 1.6" stroke="#000" stroke-width="1.5" fill="none" /></g></g></svg><svg style="left:571px;top:72px" width="16" height="16" viewBox="0 0 16 16" shape-rendering="crispEdges"><g shape-rendering="auto"><path d="M12.5 10.500H8v3H2.500c-2-1 0-3 .5-4 1-1.5-1.5-3 .5-4.5 2-.8 2 1.5 1.5 2.5" stroke="#000" stroke-width="1.2" fill="none" /></g><g shape-rendering="auto"><path d="M12.5 .5l3 3-5 4.5-2.5-2.5z" stroke="#000" stroke-width="0.9" fill="#ff0" /><path d="M8 5.5l2.5 2.5-3.2 1.3-.6-.6z" stroke="#000" stroke-width="0.9" fill="#fff" /><path d="M7.6 8.4l-1.6 1.6" stroke="#000" stroke-width="1.5" fill="none" /></g></svg><svg style="left:593px;top:72px" width="16" height="16" viewBox="0 0 16 16" shape-rendering="crispEdges"><g shape-rendering="auto"><path d="M1 4.500L8.500 13.500" stroke="#000" stroke-width="1.2" fill="none" /><path d="M4.500 13.500h4.300v-4.300" stroke="#000" stroke-width="1.2" fill="none" /></g><g shape-rendering="auto"><path d="M12.5 .5l3 3-5 4.5-2.5-2.5z" stroke="#000" stroke-width="0.9" fill="#ff0" /><path d="M8 5.5l2.5 2.5-3.2 1.3-.6-.6z" stroke="#000" stroke-width="0.9" fill="#fff" /><path d="M7.6 8.4l-1.6 1.6" stroke="#000" stroke-width="1.5" fill="none" /></g></svg><svg style="left:615px;top:72px" width="16" height="16" viewBox="0 0 16 16" shape-rendering="crispEdges"><path d="M2 2h12l-6 5z" fill="#000"/><path d="M5 1h6v2l-3 3-3-3z" fill="#0f0"/><path d="M1.5 6.500v8h13v-8" stroke="#000" stroke-width="1.6" fill="none" /><rect x="4" y="8" width="8" height="5" fill="#000"/><rect x="5" y="9" width="6" height="3" fill="#fff"/><rect x="6" y="10" width="1" height="2" fill="#f00"/><rect x="9" y="10" width="1" height="2" fill="#f00"/></svg><div class="sep" style="left:638px;top:70px;height:20px"></div><svg style="left:645px;top:72px" width="16" height="16" viewBox="0 0 16 16" shape-rendering="crispEdges"><rect x="2" y="3" width="12" height="1" fill="#fff"/><path d="M2 4.500h12" stroke="#808080" stroke-width="1" fill="none" stroke-dasharray="1 1"/><rect x="2" y="8" width="12" height="1" fill="#808080"/><rect x="2" y="9" width="12" height="1" fill="#fff"/><rect x="2" y="12" width="12" height="1" fill="#fff"/><path d="M2 13.500h12" stroke="#808080" stroke-width="1" fill="none" stroke-dasharray="1 1"/></svg><svg style="left:667px;top:72px" width="16" height="16" viewBox="0 0 16 16" shape-rendering="crispEdges"><rect x="1" y="1" width="13" height="13" fill="#808080"/><g shape-rendering="auto"><path d="M1 4l10 10M1 7l7 7M1 10l4 4M1 1.500l3 3" stroke="#d4d0c8" stroke-width="1" fill="none" /></g><rect x="7" y="3" width="1" height="6" fill="#fff"/><rect x="10" y="5" width="1" height="6" fill="#fff"/><rect x="12" y="8" width="1" height="5" fill="#fff"/><rect x="14" y="2" width="1" height="13" fill="#fff"/><rect x="2" y="14" width="13" height="1" fill="#fff"/></svg><div class="sep" style="left:690px;top:70px;height:20px"></div><svg style="left:697px;top:72px" width="16" height="16" viewBox="0 0 16 16" shape-rendering="crispEdges"><g transform="translate(1,1)"><path d="M1 1h7v3h3v4h3v6h-7v-3h-3v-3h-3z" fill="#fff"/></g><path d="M1 1h7v3h3v4h3v6h-7v-3h-3v-3h-3z" fill="#808080"/></svg><svg style="left:719px;top:72px" width="16" height="16" viewBox="0 0 16 16" shape-rendering="crispEdges"><g transform="translate(1,1)"><path d="M1 1h7v3h3v4h3v6h-7v-3h-3v-3h-3z" fill="#fff"/></g><path d="M1 1h7v3h3v4h3v6h-7v-3h-3v-3h-3z" fill="#808080"/></svg><div class="sep" style="left:742px;top:70px;height:20px"></div><svg style="left:749px;top:72px" width="16" height="16" viewBox="0 0 16 16" shape-rendering="crispEdges"><text x="0" y="15" font-family="Liberation Sans" font-weight="bold" font-size="7" shape-rendering="auto">A</text><text x="4.5" y="15" font-family="Liberation Serif" font-weight="bold" font-size="14" shape-rendering="auto">A</text><rect x="5" y="2" width="1" height="6" fill="#00f"/><path d="M2.5 4l3-3.5 3 3.500z" fill="#00f"/></svg><svg style="left:771px;top:72px" width="16" height="16" viewBox="0 0 16 16" shape-rendering="crispEdges"><text x="-.5" y="15" font-family="Liberation Serif" font-weight="bold" font-size="14" shape-rendering="auto">A</text><text x="11" y="15" font-family="Liberation Sans" font-weight="bold" font-size="7" shape-rendering="auto">A</text><rect x="11" y="1" width="1" height="6" fill="#00f"/><path d="M8.5 5l3 3.5 3-3.500z" fill="#00f"/></svg><div class="a" style="left:0px;top:92px;width:1280px;height:1px;background:#808080"></div><div class="a" style="left:0px;top:93px;width:1280px;height:1px;background:#404040"></div><div class="a" style="left:0px;top:92px;width:1px;height:858px;background:#808080"></div><div class="a" style="left:1px;top:93px;width:1px;height:857px;background:#404040"></div><div class="a" style="left:1278px;top:94px;width:1px;height:856px;background:#d4d0c8"></div><div class="a" style="left:1279px;top:92px;width:1px;height:860px;background:#fff"></div><div class="a" style="left:2px;top:950px;width:1277px;height:1px;background:#d4d0c8"></div><div class="a" style="left:1px;top:951px;width:1279px;height:1px;background:#fff"></div><div class="f" style="left:176px;top:242px;width:681px;height:422px;box-shadow:inset -1px -1px #404040,inset 1px 1px #d4d0c8,inset -2px -2px #808080,inset 2px 2px #fff"></div><div class="a" style="left:180px;top:246px;width:673px;height:18px;background:linear-gradient(90deg,#0a246a,#a6caf0)"></div><svg style="left:182px;top:247px" width="16" height="16" viewBox="0 0 16 16" shape-rendering="crispEdges"><rect x="0" y="0" width="7" height="16" fill="#000"/><rect x="1" y="1" width="5" height="14" fill="#fff"/><rect x="1" y="3" width="3" height="1" fill="#ff0"/><rect x="1" y="2" width="3" height="1" fill="#000"/><path d="M2.5 6.500h3v2h-3z" stroke="#c00000" stroke-width="1" fill="none" /><path d="M2.5 10.500h3v2h-3z" stroke="#0000c0" stroke-width="1" fill="none" /><rect x="8" y="0" width="8" height="16" fill="#000"/><rect x="9" y="1" width="6" height="14" fill="#c0c0c0"/><rect x="11" y="2" width="3" height="1" fill="#fff"/><rect x="11" y="4" width="3" height="1" fill="#fff"/><rect x="11" y="6" width="3" height="1" fill="#fff"/><rect x="11" y="8" width="3" height="1" fill="#fff"/><rect x="11" y="10" width="3" height="1" fill="#fff"/><rect x="9" y="3" width="1" height="1" fill="#000"/><rect x="9" y="5" width="1" height="1" fill="#000"/><rect x="9" y="7" width="1" height="1" fill="#000"/><rect x="9" y="9" width="1" height="1" fill="#000"/><rect x="9" y="11" width="1" height="1" fill="#000"/><rect x="11" y="13" width="4" height="1" fill="#fff"/><rect x="7" y="1" width="1" height="14" fill="#d4d0c8"/></svg><div class="t" style="left:200px;top:248px;font-size:11px;line-height:14px;height:14px;color:#fff;font-weight:bold;text-shadow:.45px 0 0 currentColor;letter-spacing:0.398px;">Workbook1* - Plot of Means for Each Cluster</div><div class="btn" style="left:801px;top:248px;width:16px;height:14px"><svg style="left:0;top:0" width="16" height="14" shape-rendering="crispEdges"><rect x="4" y="9" width="6" height="2"/></svg></div><div class="btn" style="left:817px;top:248px;width:16px;height:14px"><svg style="left:0;top:0" width="16" height="14" shape-rendering="crispEdges"><path d="M3 2h9v9h-9z M4 4v6h7v-6z" fill-rule="evenodd"/></svg></div><div class="btn" style="left:835px;top:248px;width:16px;height:14px"><svg style="left:0;top:0" width="16" height="14" shape-rendering="crispEdges"><path d="M4 3h2v1h1v1h2v-1h1v-1h2v1h-1v1h-1v1h-1v1h1v1h1v1h1v1h-2v-1h-1v-1h-2v1h-1v1h-2v-1h1v-1h1v-1h1v-1h-1v-1h-1v-1h-1z"/></svg></div><div class="a" style="left:180px;top:264px;width:179px;height:380px;background:#fff;overflow:hidden"></div><div class="f" style="left:256px;top:361px;width:102px;height:16px;"></div><div class="a" style="left:188px;top:280px;width:1px;height:6px;background:repeating-linear-gradient(180deg,#808080 0 1px,transparent 1px 2px)"></div><div class="a" style="left:194px;top:289px;width:6px;height:1px;background:repeating-linear-gradient(90deg,#808080 0 1px,transparent 1px 2px)"></div><div class="a" style="left:207px;top:296px;width:1px;height:6px;background:repeating-linear-gradient(180deg,#808080 0 1px,transparent 1px 2px)"></div><div class="a" style="left:213px;top:305px;width:6px;height:1px;background:repeating-linear-gradient(90deg,#808080 0 1px,transparent 1px 2px)"></div><div class="a" style="left:226px;top:312px;width:1px;height:58px;background:repeating-linear-gradient(180deg,#808080 0 1px,transparent 1px 2px)"></div><div class="a" style="left:226px;top:321px;width:12px;height:1px;background:repeating-linear-gradient(90deg,#808080 0 1px,transparent 1px 2px)"></div><div class="a" style="left:226px;top:337px;width:12px;height:1px;background:repeating-linear-gradient(90deg,#808080 0 1px,transparent 1px 2px)"></div><div class="a" style="left:226px;top:353px;width:12px;height:1px;background:repeating-linear-gradient(90deg,#808080 0 1px,transparent 1px 2px)"></div><div class="a" style="left:226px;top:369px;width:12px;height:1px;background:repeating-linear-gradient(90deg,#808080 0 1px,transparent 1px 2px)"></div><div class="a" style="left:184px;top:285px;width:9px;height:9px;border:1px solid #808080;background:#fff"><div class="a" style="left:1px;top:3px;width:5px;height:1px;background:#000"></div></div><div class="a" style="left:203px;top:301px;width:9px;height:9px;border:1px solid #808080;background:#fff"><div class="a" style="left:1px;top:3px;width:5px;height:1px;background:#000"></div></div><svg style="left:180px;top:265px" width="16" height="16" viewBox="0 0 16 16" shape-rendering="crispEdges"><path d="M2 3h1v-1h5v1h1v1h5v3h-12z" fill="url(#yd)"/><path d="M1 7h11l2 5h-11l-2-3z" fill="url(#yd)"/><rect x="3" y="1" width="5" height="1" fill="#808080"/><rect x="2" y="2" width="1" height="1" fill="#808080"/><rect x="8" y="2" width="1" height="1" fill="#808080"/><rect x="1" y="3" width="1" height="4" fill="#808080"/><rect x="9" y="3" width="6" height="1" fill="#808080"/><rect x="14" y="4" width="1" height="7" fill="#808080"/><rect x="15" y="4" width="1" height="10" fill="#000"/><rect x="3" y="13" width="13" height="1" fill="#000"/><rect x="0" y="6" width="12" height="1" fill="#808080"/><rect x="0" y="7" width="1" height="2" fill="#808080"/><rect x="1" y="9" width="1" height="2" fill="#808080"/><rect x="2" y="11" width="1" height="2" fill="#808080"/><rect x="3" y="12" width="11" height="1" fill="#808080"/><rect x="11" y="7" width="2" height="1" fill="#000"/><rect x="12" y="8" width="1" height="1" fill="#000"/><rect x="12" y="9" width="2" height="1" fill="#000"/><rect x="13" y="10" width="1" height="1" fill="#000"/><rect x="13" y="11" width="2" height="1" fill="#000"/></svg><svg style="left:199px;top:281px" width="16" height="16" viewBox="0 0 16 16" shape-rendering="crispEdges"><path d="M2 3h1v-1h5v1h1v1h5v3h-12z" fill="url(#yd)"/><path d="M1 7h11l2 5h-11l-2-3z" fill="url(#yd)"/><rect x="3" y="1" width="5" height="1" fill="#808080"/><rect x="2" y="2" width="1" height="1" fill="#808080"/><rect x="8" y="2" width="1" height="1" fill="#808080"/><rect x="1" y="3" width="1" height="4" fill="#808080"/><rect x="9" y="3" width="6" height="1" fill="#808080"/><rect x="14" y="4" width="1" height="7" fill="#808080"/><rect x="15" y="4" width="1" height="10" fill="#000"/><rect x="3" y="13" width="13" height="1" fill="#000"/><rect x="0" y="6" width="12" height="1" fill="#808080"/><rect x="0" y="7" width="1" height="2" fill="#808080"/><rect x="1" y="9" width="1" height="2" fill="#808080"/><rect x="2" y="11" width="1" height="2" fill="#808080"/><rect x="3" y="12" width="11" height="1" fill="#808080"/><rect x="11" y="7" width="2" height="1" fill="#000"/><rect x="12" y="8" width="1" height="1" fill="#000"/><rect x="12" y="9" width="2" height="1" fill="#000"/><rect x="13" y="10" width="1" height="1" fill="#000"/><rect x="13" y="11" width="2" height="1" fill="#000"/></svg><svg style="left:218px;top:297px" width="16" height="16" viewBox="0 0 16 16" shape-rendering="crispEdges"><path d="M2 3h1v-1h5v1h1v1h5v3h-12z" fill="url(#yd)"/><path d="M1 7h11l2 5h-11l-2-3z" fill="url(#yd)"/><rect x="3" y="1" width="5" height="1" fill="#808080"/><rect x="2" y="2" width="1" height="1" fill="#808080"/><rect x="8" y="2" width="1" height="1" fill="#808080"/><rect x="1" y="3" width="1" height="4" fill="#808080"/><rect x="9" y="3" width="6" height="1" fill="#808080"/><rect x="14" y="4" width="1" height="7" fill="#808080"/><rect x="15" y="4" width="1" height="10" fill="#000"/><rect x="3" y="13" width="13" height="1" fill="#000"/><rect x="0" y="6" width="12" height="1" fill="#808080"/><rect x="0" y="7" width="1" height="2" fill="#808080"/><rect x="1" y="9" width="1" height="2" fill="#808080"/><rect x="2" y="11" width="1" height="2" fill="#808080"/><rect x="3" y="12" width="11" height="1" fill="#808080"/><rect x="11" y="7" width="2" height="1" fill="#000"/><rect x="12" y="8" width="1" height="1" fill="#000"/><rect x="12" y="9" width="2" height="1" fill="#000"/><rect x="13" y="10" width="1" height="1" fill="#000"/><rect x="13" y="11" width="2" height="1" fill="#000"/></svg><svg style="left:237px;top:313px" width="16" height="16" viewBox="0 0 16 16" shape-rendering="crispEdges"><rect x="0" y="1" width="16" height="15" fill="#000"/><rect x="1" y="2" width="14" height="13" fill="#fff"/><rect x="5" y="3" width="3" height="1" fill="#000080"/><rect x="9" y="3" width="2" height="1" fill="#000080"/><rect x="12" y="3" width="2" height="1" fill="#000080"/><rect x="2" y="5" width="2" height="1" fill="#000080"/><rect x="5" y="5" width="3" height="1" fill="#808080"/><rect x="9" y="5" width="2" height="1" fill="#808080"/><rect x="12" y="5" width="2" height="1" fill="#808080"/><rect x="2" y="7" width="2" height="1" fill="#000080"/><rect x="5" y="7" width="3" height="1" fill="#808080"/><rect x="9" y="7" width="2" height="1" fill="#808080"/><rect x="12" y="7" width="2" height="1" fill="#808080"/><rect x="2" y="9" width="2" height="1" fill="#000080"/><rect x="5" y="9" width="3" height="1" fill="#808080"/><rect x="9" y="9" width="2" height="1" fill="#808080"/><rect x="12" y="9" width="2" height="1" fill="#808080"/><rect x="2" y="11" width="2" height="1" fill="#000080"/><rect x="5" y="11" width="3" height="1" fill="#808080"/><rect x="9" y="11" width="2" height="1" fill="#808080"/><rect x="12" y="11" width="2" height="1" fill="#808080"/><rect x="2" y="13" width="2" height="1" fill="#000080"/><rect x="5" y="13" width="3" height="1" fill="#808080"/><rect x="9" y="13" width="2" height="1" fill="#808080"/><rect x="12" y="13" width="2" height="1" fill="#808080"/></svg><svg style="left:237px;top:329px" width="16" height="16" viewBox="0 0 16 16" shape-rendering="crispEdges"><rect x="0" y="1" width="16" height="15" fill="#000"/><rect x="1" y="2" width="14" height="13" fill="#fff"/><rect x="5" y="3" width="3" height="1" fill="#000080"/><rect x="9" y="3" width="2" height="1" fill="#000080"/><rect x="12" y="3" width="2" height="1" fill="#000080"/><rect x="2" y="5" width="2" height="1" fill="#000080"/><rect x="5" y="5" width="3" height="1" fill="#808080"/><rect x="9" y="5" width="2" height="1" fill="#808080"/><rect x="12" y="5" width="2" height="1" fill="#808080"/><rect x="2" y="7" width="2" height="1" fill="#000080"/><rect x="5" y="7" width="3" height="1" fill="#808080"/><rect x="9" y="7" width="2" height="1" fill="#808080"/><rect x="12" y="7" width="2" height="1" fill="#808080"/><rect x="2" y="9" width="2" height="1" fill="#000080"/><rect x="5" y="9" width="3" height="1" fill="#808080"/><rect x="9" y="9" width="2" height="1" fill="#808080"/><rect x="12" y="9" width="2" height="1" fill="#808080"/><rect x="2" y="11" width="2" height="1" fill="#000080"/><rect x="5" y="11" width="3" height="1" fill="#808080"/><rect x="9" y="11" width="2" height="1" fill="#808080"/><rect x="12" y="11" width="2" height="1" fill="#808080"/><rect x="2" y="13" width="2" height="1" fill="#000080"/><rect x="5" y="13" width="3" height="1" fill="#808080"/><rect x="9" y="13" width="2" height="1" fill="#808080"/><rect x="12" y="13" width="2" height="1" fill="#808080"/></svg><svg style="left:237px;top:345px" width="16" height="16" viewBox="0 0 16 16" shape-rendering="crispEdges"><rect x="0" y="1" width="16" height="15" fill="#000"/><rect x="1" y="2" width="14" height="13" fill="#fff"/><rect x="5" y="3" width="3" height="1" fill="#000080"/><rect x="9" y="3" width="2" height="1" fill="#000080"/><rect x="12" y="3" width="2" height="1" fill="#000080"/><rect x="2" y="5" width="2" height="1" fill="#000080"/><rect x="5" y="5" width="3" height="1" fill="#808080"/><rect x="9" y="5" width="2" height="1" fill="#808080"/><rect x="12" y="5" width="2" height="1" fill="#808080"/><rect x="2" y="7" width="2" height="1" fill="#000080"/><rect x="5" y="7" width="3" height="1" fill="#808080"/><rect x="9" y="7" width="2" height="1" fill="#808080"/><rect x="12" y="7" width="2" height="1" fill="#808080"/><rect x="2" y="9" width="2" height="1" fill="#000080"/><rect x="5" y="9" width="3" height="1" fill="#808080"/><rect x="9" y="9" width="2" height="1" fill="#808080"/><rect x="12" y="9" width="2" height="1" fill="#808080"/><rect x="2" y="11" width="2" height="1" fill="#000080"/><rect x="5" y="11" width="3" height="1" fill="#808080"/><rect x="9" y="11" width="2" height="1" fill="#808080"/><rect x="12" y="11" width="2" height="1" fill="#808080"/><rect x="2" y="13" width="2" height="1" fill="#000080"/><rect x="5" y="13" width="3" height="1" fill="#808080"/><rect x="9" y="13" width="2" height="1" fill="#808080"/><rect x="12" y="13" width="2" height="1" fill="#808080"/></svg><svg style="left:237px;top:361px" width="16" height="16" viewBox="0 0 16 16" shape-rendering="crispEdges"><path d="M2.5 1.500h10v7h-10z" stroke="#000" stroke-width="1" fill="#fff" /><rect x="4" y="3" width="1" height="1" fill="#008000"/><rect x="5" y="4" width="1" height="1" fill="#008000"/><rect x="4" y="5" width="1" height="1" fill="#008000"/><rect x="7" y="2" width="1" height="1" fill="#008000"/><rect x="9" y="3" width="1" height="1" fill="#008000"/><path d="M7.5 4.500h8v7h-8z" stroke="#000" stroke-width="1" fill="#fff" /><g shape-rendering="auto"><path d="M11 6.500h1.500l1 2 1.5 1.5" stroke="#00f" stroke-width="1.2" fill="none" /></g><path d="M.500 7.500h10v7h-10z" stroke="#000" stroke-width="1" fill="#fff" /><rect x="2" y="11" width="1" height="3" fill="#f00"/><rect x="4" y="9" width="1" height="5" fill="#f00"/><rect x="6" y="10" width="1" height="4" fill="#f00"/><rect x="8" y="12" width="1" height="2" fill="#f00"/></svg><div class="t" style="left:200px;top:267px;font-size:11px;line-height:13px;height:13px;letter-spacing:0.031px;">Workbook1*</div><div class="a" style="left:219px;top:283px;width:139px;height:14px;overflow:hidden"><div class="t" style="left:0px;top:0px;font-size:11px;line-height:13px;height:13px;letter-spacing:-0.040px;">Групповой анализ (Desease</div></div><div class="a" style="left:238px;top:299px;width:120px;height:14px;overflow:hidden"><div class="t" style="left:0px;top:0px;font-size:11px;line-height:13px;height:13px;letter-spacing:-0.171px;">K-means clustering result</div></div><div class="a" style="left:257px;top:315px;width:101px;height:14px;overflow:hidden"><div class="t" style="left:0px;top:0px;font-size:11px;line-height:13px;height:13px;letter-spacing:-0.181px;">Cluster Means (Desea</div></div><div class="a" style="left:257px;top:331px;width:101px;height:14px;overflow:hidden"><div class="t" style="left:0px;top:0px;font-size:11px;line-height:13px;height:13px;letter-spacing:-0.242px;">Euclidean Distances b</div></div><div class="a" style="left:257px;top:347px;width:101px;height:14px;overflow:hidden"><div class="t" style="left:0px;top:0px;font-size:11px;line-height:13px;height:13px;letter-spacing:-0.102px;">Дисперсионный ана</div></div><div class="a" style="left:257px;top:363px;width:101px;height:14px;overflow:hidden"><div class="t" style="left:0px;top:0px;font-size:11px;line-height:13px;height:13px;letter-spacing:-0.159px;">Plot of Means for Eac</div></div><div class="a chk" style="left:180px;top:644px;width:178px;height:16px;"></div><div class="cb" style="left:180px;top:644px;width:16px;height:16px;"></div><div class="cb" style="left:342px;top:644px;width:16px;height:16px;"></div><div class="cb" style="left:196px;top:644px;width:83px;height:16px;"></div><svg style="left:185px;top:648px" width="4" height="7" shape-rendering="crispEdges"><path d="M4 0v7l-4-3.5z"/></svg><svg style="left:348px;top:648px" width="4" height="7" shape-rendering="crispEdges"><path d="M0 0v7l4-3.5z"/></svg><div class="a" style="left:359px;top:264px;width:494px;height:1px;background:#ebe9e5"></div><div class="a" style="left:359px;top:265px;width:493px;height:1px;background:#fff"></div><div class="a" style="left:852px;top:265px;width:1px;height:374px;background:#404040"></div><div class="a" style="left:358px;top:638px;width:495px;height:1px;background:#404040"></div><div class="a" style="left:358px;top:637px;width:494px;height:1px;background:#808080"></div><div class="a" style="left:362px;top:269px;width:487px;height:368px;background:#fff;border-left:1px solid #808080;border-top:1px solid #808080"></div><div class="a" style="left:363px;top:270px;width:485px;height:365px;background:#d4d0c8;border-left:2px solid #404040;border-top:2px solid #404040"></div><div class="a" style="left:365px;top:272px;width:482px;height:362px;background:#fff"></div><div class="a" style="left:365px;top:272px;width:481px;height:361px;background:#808080"></div><div class="a" style="left:366px;top:273px;width:479px;height:359px;background:#fffbf0"></div><div class="a" style="left:394px;top:299px;width:367px;height:280px;background:#fff"></div><svg style="left:0;top:0" width="1280" height="1024" shape-rendering="crispEdges"><path d="M396 331.5H759" stroke="#b8b8b8" stroke-dasharray="1 1"/><path d="M396 362.5H759" stroke="#b8b8b8" stroke-dasharray="1 1"/><path d="M396 392.5H759" stroke="#b8b8b8" stroke-dasharray="1 1"/><path d="M396 423.5H759" stroke="#b8b8b8" stroke-dasharray="1 1"/><path d="M396 454.5H759" stroke="#b8b8b8" stroke-dasharray="1 1"/><path d="M396 485.5H759" stroke="#b8b8b8" stroke-dasharray="1 1"/><path d="M396 516.5H759" stroke="#b8b8b8" stroke-dasharray="1 1"/><path d="M396 546.5H759" stroke="#b8b8b8" stroke-dasharray="1 1"/><path d="M468.5 301V577" stroke="#b8b8b8" stroke-dasharray="1 1"/><path d="M541.5 301V577" stroke="#b8b8b8" stroke-dasharray="1 1"/><path d="M613.5 301V577" stroke="#b8b8b8" stroke-dasharray="1 1"/><path d="M686.5 301V577" stroke="#b8b8b8" stroke-dasharray="1 1"/><rect x="395.5" y="300.5" width="364" height="277" fill="none" stroke="#000"/><path d="M396 300.5h2M759 300.5h-2M396 306.5h1M759 306.5h-1M396 312.5h1M759 312.5h-1M396 318.5h1M759 318.5h-1M396 325.5h1M759 325.5h-1M396 331.5h2M759 331.5h-2M396 337.5h1M759 337.5h-1M396 343.5h1M759 343.5h-1M396 349.5h1M759 349.5h-1M396 355.5h1M759 355.5h-1M396 362.5h2M759 362.5h-2M396 368.5h1M759 368.5h-1M396 374.5h1M759 374.5h-1M396 380.5h1M759 380.5h-1M396 386.5h1M759 386.5h-1M396 392.5h2M759 392.5h-2M396 398.5h1M759 398.5h-1M396 405.5h1M759 405.5h-1M396 411.5h1M759 411.5h-1M396 417.5h1M759 417.5h-1M396 423.5h2M759 423.5h-2M396 429.5h1M759 429.5h-1M396 435.5h1M759 435.5h-1M396 442.5h1M759 442.5h-1M396 448.5h1M759 448.5h-1M396 454.5h2M759 454.5h-2M396 460.5h1M759 460.5h-1M396 466.5h1M759 466.5h-1M396 472.5h1M759 472.5h-1M396 479.5h1M759 479.5h-1M396 485.5h2M759 485.5h-2M396 491.5h1M759 491.5h-1M396 497.5h1M759 497.5h-1M396 503.5h1M759 503.5h-1M396 509.5h1M759 509.5h-1M396 515.5h2M759 515.5h-2M396 522.5h1M759 522.5h-1M396 528.5h1M759 528.5h-1M396 534.5h1M759 534.5h-1M396 540.5h1M759 540.5h-1M396 546.5h2M759 546.5h-2M396 552.5h1M759 552.5h-1M396 559.5h1M759 559.5h-1M396 565.5h1M759 565.5h-1M396 571.5h1M759 571.5h-1M396 577.5h2M759 577.5h-2M395.5 301v2M395.5 577v-2M413.5 301v1M413.5 577v-1M431.5 301v1M431.5 577v-1M450.5 301v1M450.5 577v-1M468.5 301v2M468.5 577v-2M486.5 301v1M486.5 577v-1M504.5 301v1M504.5 577v-1M522.5 301v1M522.5 577v-1M541.5 301v2M541.5 577v-2M559.5 301v1M559.5 577v-1M577.5 301v1M577.5 577v-1M595.5 301v1M595.5 577v-1M613.5 301v2M613.5 577v-2M632.5 301v1M632.5 577v-1M650.5 301v1M650.5 577v-1M668.5 301v1M668.5 577v-1M686.5 301v2M686.5 577v-2M704.5 301v1M704.5 577v-1M723.5 301v1M723.5 577v-1M741.5 301v1M741.5 577v-1M759.5 301v2M759.5 577v-2" stroke="#000"/></svg><svg style="left:0;top:0" width="1280" height="1024"><polyline points="468.5,384.5 541.5,371.5 613.5,381.5 686.5,380.5" fill="none" stroke="#00f" stroke-width="1"/><polyline points="468.5,432.5 541.5,447.5 613.5,464.5 686.5,484.5" fill="none" stroke="#f00" stroke-width="1.1" stroke-dasharray="3 3"/><polyline points="468.5,505.5 541.5,498.5 613.5,479.5 686.5,463.5" fill="none" stroke="#008000" stroke-width="1.2" stroke-dasharray="1 2"/><circle cx="468.5" cy="384.5" r="2" fill="#fff" stroke="#00f"/><circle cx="541.5" cy="371.5" r="2" fill="#fff" stroke="#00f"/><circle cx="613.5" cy="381.5" r="2" fill="#fff" stroke="#00f"/><circle cx="686.5" cy="380.5" r="2" fill="#fff" stroke="#00f"/><rect x="466.5" y="430.5" width="4" height="4" fill="#fff" stroke="#f00" shape-rendering="crispEdges"/><rect x="539.5" y="445.5" width="4" height="4" fill="#fff" stroke="#f00" shape-rendering="crispEdges"/><rect x="611.5" y="462.5" width="4" height="4" fill="#fff" stroke="#f00" shape-rendering="crispEdges"/><rect x="684.5" y="482.5" width="4" height="4" fill="#fff" stroke="#f00" shape-rendering="crispEdges"/><path d="M466.0 505.5l2.5 -2.5l2.5 2.5l-2.5 2.5z" fill="#fff" stroke="#008000"/><path d="M539.0 498.5l2.5 -2.5l2.5 2.5l-2.5 2.5z" fill="#fff" stroke="#008000"/><path d="M611.0 479.5l2.5 -2.5l2.5 2.5l-2.5 2.5z" fill="#fff" stroke="#008000"/><path d="M684.0 463.5l2.5 -2.5l2.5 2.5l-2.5 2.5z" fill="#fff" stroke="#008000"/><path d="M766 581.5H784" stroke="#00f"  shape-rendering="crispEdges"/><path d="M766 594.5H784" stroke="#f00" stroke-dasharray="3 3" shape-rendering="crispEdges"/><path d="M766 608.5H784" stroke="#008000" stroke-dasharray="1 2" shape-rendering="crispEdges"/><circle cx="775.5" cy="581.5" r="2" fill="#fff" stroke="#00f"/><rect x="773.5" y="592.5" width="4" height="4" fill="#fff" stroke="#f00" shape-rendering="crispEdges"/><path d="M773 608.5l2.5 -2.5l2.5 2.5l-2.5 2.5z" fill="#fff" stroke="#008000"/></svg><div class="t" style="left:497px;top:281px;font-size:10px;line-height:12px;height:12px;letter-spacing:0.185px;">Plot of Means for Each Cluster</div><div class="t" style="left:375px;top:295px;font-size:10px;line-height:12px;height:12px;letter-spacing:0.547px;">2,5</div><div class="t" style="left:375px;top:326px;font-size:10px;line-height:12px;height:12px;letter-spacing:0.547px;">2,0</div><div class="t" style="left:375px;top:357px;font-size:10px;line-height:12px;height:12px;letter-spacing:0.547px;">1,5</div><div class="t" style="left:375px;top:387px;font-size:10px;line-height:12px;height:12px;letter-spacing:0.547px;">1,0</div><div class="t" style="left:375px;top:418px;font-size:10px;line-height:12px;height:12px;letter-spacing:0.547px;">0,5</div><div class="t" style="left:375px;top:449px;font-size:10px;line-height:12px;height:12px;letter-spacing:0.547px;">0,0</div><div class="t" style="left:372px;top:480px;font-size:10px;line-height:12px;height:12px;letter-spacing:0.255px;">-0,5</div><div class="t" style="left:372px;top:511px;font-size:10px;line-height:12px;height:12px;letter-spacing:0.255px;">-1,0</div><div class="t" style="left:372px;top:541px;font-size:10px;line-height:12px;height:12px;letter-spacing:0.255px;">-1,5</div><div class="t" style="left:372px;top:572px;font-size:10px;line-height:12px;height:12px;letter-spacing:0.255px;">-2,0</div><div class="t" style="left:432px;top:583px;font-size:10px;line-height:12px;height:12px;letter-spacing:0.097px;">DISPANCER(S)</div><div class="t" style="left:574px;top:583px;font-size:10px;line-height:12px;height:12px;letter-spacing:0.318px;">DEATH RATE(S)</div><div class="t" style="left:510px;top:596px;font-size:10px;line-height:12px;height:12px;letter-spacing:0.207px;">FIST LIFE(S)</div><div class="t" style="left:655px;top:596px;font-size:10px;line-height:12px;height:12px;letter-spacing:0.146px;">ALCOGOL(S)</div><div class="t" style="left:549px;top:615px;font-size:10px;line-height:12px;height:12px;font-weight:bold;letter-spacing:-0.109px;/*nosh*/">Переменны</div><div class="t" style="left:789px;top:575px;font-size:10px;line-height:12px;height:12px;letter-spacing:0.480px;">Кластер 1</div><div class="t" style="left:789px;top:589px;font-size:10px;line-height:12px;height:12px;letter-spacing:0.480px;">Кластер 2</div><div class="t" style="left:789px;top:602px;font-size:10px;line-height:12px;height:12px;letter-spacing:0.480px;">Кластер 3</div><div class="a" style="left:360px;top:639px;width:1px;height:18px;background:#fff"></div><div class="a" style="left:361px;top:657px;width:204px;height:1px;background:#404040"></div><svg style="left:366px;top:640px" width="16" height="16" viewBox="0 0 16 16" shape-rendering="crispEdges"><rect x="0" y="1" width="16" height="15" fill="#000"/><rect x="1" y="2" width="14" height="13" fill="#fff"/><rect x="5" y="3" width="3" height="1" fill="#000080"/><rect x="9" y="3" width="2" height="1" fill="#000080"/><rect x="12" y="3" width="2" height="1" fill="#000080"/><rect x="2" y="5" width="2" height="1" fill="#000080"/><rect x="5" y="5" width="3" height="1" fill="#808080"/><rect x="9" y="5" width="2" height="1" fill="#808080"/><rect x="12" y="5" width="2" height="1" fill="#808080"/><rect x="2" y="7" width="2" height="1" fill="#000080"/><rect x="5" y="7" width="3" height="1" fill="#808080"/><rect x="9" y="7" width="2" height="1" fill="#808080"/><rect x="12" y="7" width="2" height="1" fill="#808080"/><rect x="2" y="9" width="2" height="1" fill="#000080"/><rect x="5" y="9" width="3" height="1" fill="#808080"/><rect x="9" y="9" width="2" height="1" fill="#808080"/><rect x="12" y="9" width="2" height="1" fill="#808080"/><rect x="2" y="11" width="2" height="1" fill="#000080"/><rect x="5" y="11" width="3" height="1" fill="#808080"/><rect x="9" y="11" width="2" height="1" fill="#808080"/><rect x="12" y="11" width="2" height="1" fill="#808080"/><rect x="2" y="13" width="2" height="1" fill="#000080"/><rect x="5" y="13" width="3" height="1" fill="#808080"/><rect x="9" y="13" width="2" height="1" fill="#808080"/><rect x="12" y="13" width="2" height="1" fill="#808080"/></svg><div class="t" style="left:389px;top:643px;font-size:11px;line-height:13px;height:13px;letter-spacing:-0.036px;">Дисперсионный анализ (Desease)</div><div class="f" style="left:566px;top:637px;width:179px;height:22px;"></div><div class="a" style="left:565px;top:637px;width:1px;height:22px;background:#fff"></div><div class="a" style="left:744px;top:638px;width:1px;height:21px;background:#404040"></div><div class="a" style="left:567px;top:659px;width:177px;height:1px;background:#404040"></div><svg style="left:573px;top:642px" width="16" height="16" viewBox="0 0 16 16" shape-rendering="crispEdges"><path d="M2.5 1.500h10v7h-10z" stroke="#000" stroke-width="1" fill="#fff" /><rect x="4" y="3" width="1" height="1" fill="#008000"/><rect x="5" y="4" width="1" height="1" fill="#008000"/><rect x="4" y="5" width="1" height="1" fill="#008000"/><rect x="7" y="2" width="1" height="1" fill="#008000"/><rect x="9" y="3" width="1" height="1" fill="#008000"/><path d="M7.5 4.500h8v7h-8z" stroke="#000" stroke-width="1" fill="#fff" /><g shape-rendering="auto"><path d="M11 6.500h1.500l1 2 1.5 1.5" stroke="#00f" stroke-width="1.2" fill="none" /></g><path d="M.500 7.500h10v7h-10z" stroke="#000" stroke-width="1" fill="#fff" /><rect x="2" y="11" width="1" height="3" fill="#f00"/><rect x="4" y="9" width="1" height="5" fill="#f00"/><rect x="6" y="10" width="1" height="4" fill="#f00"/><rect x="8" y="12" width="1" height="2" fill="#f00"/></svg><div class="t" style="left:595px;top:644px;font-size:11px;line-height:13px;height:13px;letter-spacing:-0.213px;">Plot of Means for Each Cluster</div><div class="cb" style="left:820px;top:642px;width:16px;height:16px;"></div><div class="cb" style="left:836px;top:642px;width:17px;height:16px;"></div><svg style="left:825px;top:646px" width="4" height="7" shape-rendering="crispEdges"><path d="M4 0v7l-4-3.5z"/></svg><svg style="left:843px;top:646px" width="4" height="7" shape-rendering="crispEdges"><path d="M0 0v7l4-3.5z"/></svg><div class="f" style="left:2px;top:926px;width:160px;height:24px;box-shadow:inset -1px -1px #404040,inset 1px 1px #d4d0c8,inset -2px -2px #808080,inset 2px 2px #fff"></div><div class="a" style="left:5px;top:929px;width:154px;height:18px;background:linear-gradient(90deg,#808080,#c0c0c0)"></div><svg style="left:7px;top:930px" width="16" height="16" viewBox="0 0 16 16" shape-rendering="crispEdges"><rect x="0" y="1" width="16" height="15" fill="#000"/><rect x="1" y="2" width="14" height="13" fill="#fff"/><rect x="5" y="3" width="3" height="1" fill="#000080"/><rect x="9" y="3" width="2" height="1" fill="#000080"/><rect x="12" y="3" width="2" height="1" fill="#000080"/><rect x="2" y="5" width="2" height="1" fill="#000080"/><rect x="5" y="5" width="3" height="1" fill="#808080"/><rect x="9" y="5" width="2" height="1" fill="#808080"/><rect x="12" y="5" width="2" height="1" fill="#808080"/><rect x="2" y="7" width="2" height="1" fill="#000080"/><rect x="5" y="7" width="3" height="1" fill="#808080"/><rect x="9" y="7" width="2" height="1" fill="#808080"/><rect x="12" y="7" width="2" height="1" fill="#808080"/><rect x="2" y="9" width="2" height="1" fill="#000080"/><rect x="5" y="9" width="3" height="1" fill="#808080"/><rect x="9" y="9" width="2" height="1" fill="#808080"/><rect x="12" y="9" width="2" height="1" fill="#808080"/><rect x="2" y="11" width="2" height="1" fill="#000080"/><rect x="5" y="11" width="3" height="1" fill="#808080"/><rect x="9" y="11" width="2" height="1" fill="#808080"/><rect x="12" y="11" width="2" height="1" fill="#808080"/><rect x="2" y="13" width="2" height="1" fill="#000080"/><rect x="5" y="13" width="3" height="1" fill="#808080"/><rect x="9" y="13" width="2" height="1" fill="#808080"/><rect x="12" y="13" width="2" height="1" fill="#808080"/></svg><div class="t" style="left:26px;top:931px;font-size:11px;line-height:14px;height:14px;color:#d4d0c8;font-weight:bold;text-shadow:.45px 0 0 currentColor;letter-spacing:0.275px;">Данные: De...</div><div class="btn" style="left:107px;top:931px;width:16px;height:14px"><svg style="left:0;top:0" width="16" height="14" shape-rendering="crispEdges"><path d="M5 2h6v6h-2v-1h1v-3h-4v1h-1z M3 5h6v6h-6z M4 7v3h4v-3z" fill-rule="evenodd"/></svg></div><div class="btn" style="left:123px;top:931px;width:16px;height:14px"><svg style="left:0;top:0" width="16" height="14" shape-rendering="crispEdges"><path d="M3 2h9v9h-9z M4 4v6h7v-6z" fill-rule="evenodd"/></svg></div><div class="btn" style="left:141px;top:931px;width:16px;height:14px"><svg style="left:0;top:0" width="16" height="14" shape-rendering="crispEdges"><path d="M4 3h2v1h1v1h2v-1h1v-1h2v1h-1v1h-1v1h-1v1h1v1h1v1h1v1h-2v-1h-1v-1h-2v1h-1v1h-2v-1h1v-1h1v-1h1v-1h-1v-1h-1v-1h-1z"/></svg></div><div class="f" style="left:0px;top:952px;width:1280px;height:24px;"></div><div class="btn" style="left:2px;top:954px;width:22px;height:22px;"></div><svg style="left:5px;top:957px" width="16" height="16" viewBox="0 0 16 16" shape-rendering="crispEdges"><rect x="0" y="0" width="16" height="16" fill="#000"/><rect x="1" y="1" width="14" height="14" fill="#fff"/><rect x="1" y="3" width="14" height="1" fill="#c8c8c8"/><rect x="1" y="6" width="14" height="1" fill="#c8c8c8"/><rect x="1" y="9" width="14" height="1" fill="#c8c8c8"/><rect x="1" y="12" width="14" height="1" fill="#c8c8c8"/><rect x="3" y="1" width="1" height="14" fill="#c8c8c8"/><rect x="6" y="1" width="1" height="14" fill="#c8c8c8"/><rect x="9" y="1" width="1" height="14" fill="#c8c8c8"/><rect x="12" y="1" width="1" height="14" fill="#c8c8c8"/><g shape-rendering="auto"><path d="M3 12.5L4.5 10 6 4.5 7 3.5 8 5 9.5 10 10.5 10.5 11.5 8.5 12.5 9 13.5 12.5" stroke="#000" stroke-width="1.1" fill="none" /></g></svg><div class="btn" style="left:28px;top:954px;width:160px;height:22px;"></div><svg style="left:32px;top:957px" width="16" height="16" viewBox="0 0 16 16" shape-rendering="crispEdges"><rect x="0" y="0" width="16" height="16" fill="#fff"/><path d="M0 1.5H10.5M0 3.5H10.5M10.5 1.5V3.5M10.5 2.5H13.5M13.5 2.5V9.5M13.5 6.5H15.5M0 5.5H6.5M0 7.5H6.5M6.5 5.5V7.5M6.5 6.5H10.5M10.5 6.5V12.5M10.5 9.5H13.5M0 9.5H2.5M0 11.5H2.5M2.5 9.5V11.5M2.5 10.5H5.5M5.5 10.5V14.5M5.5 12.5H10.5M0 13.5H2.5M0 15.5H2.5M2.5 13.5V15.5M2.5 14.5H5.5" stroke="#00f" stroke-width="1" fill="none" stroke-linecap="square"/></svg><div class="t" style="left:50px;top:959px;font-size:11px;line-height:13px;height:13px;font-weight:bold;text-shadow:.45px 0 0 currentColor;letter-spacing:0.790px;">k - Результаты клас...</div><div class="a" style="left:0px;top:976px;width:1280px;height:1px;background:#808080"></div><div class="a" style="left:0px;top:977px;width:1280px;height:1px;background:#fff"></div><div class="f" style="left:0px;top:978px;width:1280px;height:19px;"></div><div class="t" style="left:4px;top:982px;font-size:11px;line-height:13px;height:13px;letter-spacing:-0.449px;">Ready</div><div class="sunk1" style="left:1171px;top:980px;width:38px;height:16px;"></div><div class="t" style="left:1177px;top:982px;font-size:11px;line-height:13px;height:13px;color:#808080;letter-spacing:-1.323px;">CAPS</div><div class="sunk1" style="left:1211px;top:980px;width:35px;height:16px;"></div><div class="t" style="left:1217px;top:982px;font-size:11px;line-height:13px;height:13px;letter-spacing:-0.531px;">NUM</div><div class="sunk1" style="left:1248px;top:980px;width:32px;height:16px;"></div><div class="t" style="left:1254px;top:982px;font-size:11px;line-height:13px;height:13px;color:#808080;letter-spacing:-1.117px;">REC</div><div class="a" style="left:0px;top:997px;width:1280px;height:1px;background:#fff"></div><div class="f" style="left:0px;top:998px;width:1280px;height:26px;"></div><div class="btn" style="left:2px;top:1000px;width:54px;height:22px;"></div><svg style="left:6px;top:1003px" width="16" height="16" viewBox="0 0 16 16" shape-rendering="crispEdges"><g shape-rendering="auto"><path d="M6 4.5l2-2.5 2.5-1h2.5l2 1.500 1.500 3V15.500l-2-2.500h-4l-2 1.200-2.500.300z" fill="#000"/><path d="M8 4.500l2.500-1.800v3.800l-2.500 1.500z" fill="#f00"/><path d="M12 2.500l2.500 1.800v3.700l-2.500-1.500z" fill="#0e0"/><path d="M8 9.500l2.500-1.500v3.500l-2.500 1.500z" fill="#00f"/><path d="M12 8l2.500 1.500v3.500l-2.500-1.500z" fill="#ff0"/></g><rect x="0" y="3" width="1" height="2" fill="#000"/><rect x="0" y="6" width="1" height="2" fill="#f00"/><rect x="0" y="9" width="1" height="2" fill="#00f"/><rect x="0" y="12" width="1" height="2" fill="#000"/><rect x="2" y="4" width="4" height="1" fill="#000"/><rect x="2" y="3" width="1" height="1" fill="#000"/><rect x="2" y="7" width="4" height="2" fill="#f00"/><rect x="2" y="10" width="4" height="2" fill="#00f"/><rect x="2" y="13" width="4" height="2" fill="#000"/><rect x="3" y="7" width="1" height="1" fill="#fff"/><rect x="3" y="10" width="1" height="1" fill="#fff"/><rect x="5" y="5" width="1" height="9" fill="#000"/></svg><div class="t" style="left:24px;top:1005px;font-size:11px;line-height:13px;height:13px;font-weight:bold;text-shadow:.45px 0 0 currentColor;letter-spacing:0.542px;">Пуск</div><div class="sep" style="left:59px;top:1001px;height:20px"></div><div class="rais1" style="left:63px;top:1002px;width:3px;height:18px;"></div><svg style="left:73px;top:1003px" width="16" height="16" viewBox="0 0 16 16" shape-rendering="crispEdges"><g shape-rendering="auto"><path d="M.5 3.5h14v10h-14z" stroke="#6878b8" stroke-width="1" fill="#f4f6fc" /><path d="M13 0L7 3.500 6 1.500 2 7h6.500l-1-2 5.500-3z" fill="#1c78f0"/><path d="M3 16l6-3.500 1 2 4-5.500h-6.500l1 2-5.500 3z" fill="#1c78f0"/><rect x="10" y="5" width="2" height="2" fill="#d05020"/><path d="M4 9.500h4" stroke="#a0a8c0" stroke-width="1" fill="none" /></g></svg><svg style="left:96px;top:1003px" width="16" height="16" viewBox="0 0 16 16" shape-rendering="crispEdges"><g shape-rendering="auto"><ellipse cx="8" cy="8" rx="8" ry="3.300" fill="none" stroke="#58b0f4" stroke-width="1.300" transform="rotate(-38 8 8)"/><text x="1.500" y="14.500" font-family="Liberation Sans" font-weight="bold" font-size="20" fill="#2484e4">e</text></g></svg><svg style="left:119px;top:1003px" width="16" height="16" viewBox="0 0 16 16" shape-rendering="crispEdges"><rect x="0" y="2" width="16" height="14" fill="#000"/><rect x="0" y="2" width="15" height="13" fill="#2090d0"/><g shape-rendering="auto"><ellipse cx="7.5" cy="9" rx="7" ry="5.5" fill="#f0ecc8"/></g><rect x="5" y="7" width="5" height="6" fill="#000"/><rect x="6" y="8" width="3" height="4" fill="#fff"/><g shape-rendering="auto"><path d="M8 8l5.5-6" stroke="#f0b000" stroke-width="2.2" fill="none" /><path d="M13 2.500l1.2-1.3" stroke="#e03030" stroke-width="2.2" fill="none" /><path d="M6.5 9.500l.8-2 1.2 1.200z" fill="#000"/></g></svg><div class="sep" style="left:143px;top:1001px;height:20px"></div><div class="rais1" style="left:147px;top:1002px;width:3px;height:18px;"></div><div class="btn" style="left:154px;top:1000px;width:160px;height:22px;"></div><svg style="left:158px;top:1003px" width="16" height="16" viewBox="0 0 16 16" shape-rendering="crispEdges"><rect x="0" y="0" width="16" height="14" fill="#0ff"/><rect x="1" y="1" width="6" height="12" fill="#0000c0"/><rect x="9" y="1" width="6" height="12" fill="#0000c0"/><rect x="2" y="2" width="4" height="1" fill="#ff0"/><rect x="10" y="2" width="4" height="1" fill="#ff0"/><rect x="2" y="4" width="4" height="1" fill="#0ff"/><rect x="10" y="4" width="4" height="1" fill="#0ff"/><rect x="2" y="6" width="4" height="1" fill="#0ff"/><rect x="10" y="6" width="4" height="1" fill="#0ff"/><rect x="2" y="8" width="4" height="1" fill="#0ff"/><rect x="0" y="14" width="16" height="1" fill="#000"/><path d="M0 15.500h16" stroke="#00f" stroke-width="1" fill="none" stroke-dasharray="1 1"/></svg><div class="t" style="left:176px;top:1005px;font-size:11px;line-height:13px;height:13px;letter-spacing:0.248px;">{\\413_2\D$\D\User box\...</div><div class="btn" style="left:317px;top:1000px;width:160px;height:22px;"></div><svg style="left:321px;top:1003px" width="16" height="16" viewBox="0 0 16 16" shape-rendering="crispEdges"><path d="M4.5 .500h8l3 3v12h-11z" stroke="#000" stroke-width="1" fill="#fff" /><rect x="8" y="5" width="6" height="1" fill="#c0c0c0"/><rect x="8" y="7" width="6" height="1" fill="#c0c0c0"/><rect x="8" y="9" width="6" height="1" fill="#c0c0c0"/><rect x="6" y="12" width="8" height="1" fill="#c0c0c0"/><rect x="0" y="2" width="10" height="10" fill="#fff"/><path d="M.500 2.500h9v9h-9z" stroke="#00f" stroke-width="1" fill="none" stroke-dasharray="1 1"/><text x="1" y="10.5" font-family="Liberation Sans" font-weight="bold" font-size="9" fill="#0000c0" shape-rendering="auto">W</text></svg><div class="t" style="left:339px;top:1005px;font-size:11px;line-height:13px;height:13px;letter-spacing:-0.298px;">ЛАБОРАТОРНАЯ РАБОТ...</div><div class="pbtn chk" style="left:480px;top:1000px;width:160px;height:22px;"></div><svg style="left:484px;top:1004px" width="16" height="16" viewBox="0 0 16 16" shape-rendering="crispEdges"><rect x="0" y="0" width="16" height="16" fill="#000"/><rect x="1" y="1" width="14" height="14" fill="#fff"/><rect x="1" y="3" width="14" height="1" fill="#c8c8c8"/><rect x="1" y="6" width="14" height="1" fill="#c8c8c8"/><rect x="1" y="9" width="14" height="1" fill="#c8c8c8"/><rect x="1" y="12" width="14" height="1" fill="#c8c8c8"/><rect x="3" y="1" width="1" height="14" fill="#c8c8c8"/><rect x="6" y="1" width="1" height="14" fill="#c8c8c8"/><rect x="9" y="1" width="1" height="14" fill="#c8c8c8"/><rect x="12" y="1" width="1" height="14" fill="#c8c8c8"/><g shape-rendering="auto"><path d="M3 12.5L4.5 10 6 4.5 7 3.5 8 5 9.5 10 10.5 10.5 11.5 8.5 12.5 9 13.5 12.5" stroke="#000" stroke-width="1.1" fill="none" /></g></svg><div class="t" style="left:502px;top:1006px;font-size:11px;line-height:13px;height:13px;font-weight:bold;text-shadow:.45px 0 0 currentColor;letter-spacing:0.504px;">STATISTICA - Workbo...</div><div class="btn" style="left:643px;top:1000px;width:160px;height:22px;"></div><svg style="left:647px;top:1003px" width="16" height="16" viewBox="0 0 16 16" shape-rendering="crispEdges"><rect x="0" y="0" width="16" height="16" fill="#006400"/><rect x="2" y="2" width="12" height="12" fill="#fff"/><g shape-rendering="auto"><path d="M3 3h4l6 10h-4z" fill="#006400"/><path d="M9 3h4l-3 4-2-1.500zM3 13l3-4.5 2 1.5-1.5 3z" fill="#006400"/></g><rect x="9" y="11" width="5" height="1" fill="#006400"/><rect x="9" y="13" width="5" height="1" fill="#fff"/></svg><div class="t" style="left:665px;top:1005px;font-size:11px;line-height:13px;height:13px;letter-spacing:-0.086px;">Microsoft Excel - Книга1</div><div class="btn" style="left:806px;top:1000px;width:160px;height:22px;"></div><svg style="left:810px;top:1003px" width="16" height="16" viewBox="0 0 16 16" shape-rendering="crispEdges"><path d="M3.5 .500h8l3 3v12h-11z" stroke="#808080" stroke-width="1" fill="#fff" /><path d="M11.5 .500v3h3" stroke="#808080" stroke-width="1" fill="none" /><g shape-rendering="auto"><ellipse cx="5.5" cy="8.5" rx="5.5" ry="2.2" fill="none" stroke="#e8a000" stroke-width="1" transform="rotate(-35 5.5 8.5)"/><text x="1" y="13" font-family="Liberation Sans" font-weight="bold" font-size="13" fill="#1858d8">e</text></g></svg><div class="t" style="left:828px;top:1005px;font-size:11px;line-height:13px;height:13px;letter-spacing:0.123px;">Электронный учебник - ...</div><div class="sunk1" style="left:1130px;top:1000px;width:148px;height:22px;"></div><svg style="left:1133px;top:1003px" width="16" height="16" viewBox="0 0 16 16" shape-rendering="crispEdges"><g shape-rendering="auto"><path d="M1.5 8L8.5 1.5h1.5l1 2v9l-1 2H8.5z" stroke="#000" stroke-width="1" fill="#ff0" /><ellipse cx="9.3" cy="8" rx="1.3" ry="5" fill="#fff"/><path d="M3 8l5-4.500v9z" fill="url(#yd)"/><circle cx="9.500" cy="8" r="1" fill="#000"/><path d="M12.500 5l2-2M12.500 8.500h3M12.500 12l2 2" stroke="#808080" stroke-width="1" fill="none" /></g></svg><svg style="left:1152px;top:1003px" width="16" height="16" viewBox="0 0 16 16" shape-rendering="crispEdges"><rect x="0" y="0" width="16" height="16" fill="#000080"/><text x="1.8" y="12" font-family="Liberation Sans" font-size="11" fill="#fff" shape-rendering="auto" textLength="11.5" lengthAdjust="spacingAndGlyphs">EN</text></svg><svg style="left:1170px;top:1003px" width="16" height="16" viewBox="0 0 16 16" shape-rendering="crispEdges"><rect x="0" y="0" width="16" height="16" fill="#fff"/><rect x="0" y="0" width="16" height="16" fill="url(#ckp)"/><g shape-rendering="auto"><path d="M0 4l12 12M4 0l12 12M0 12L12 0M4 16L16 4" stroke="#000" stroke-width="1.1" fill="none" /><path d="M6 2l1.5 1.5-1.500 1.500-1.500-1.500zM12.500 5.500l1.500 1.500-1.500 1.500-1.500-1.500zM3 7.500l1.200 1.200-1.200 1.200-1.200-1.200zM9.500 9l1.500 1.500-1.500 1.500-1.500-1.500z" fill="#0000c0"/></g><rect x="0" y="15" width="16" height="1" fill="#000"/><rect x="15" y="0" width="1" height="16" fill="#000"/></svg><svg style="left:1188px;top:1003px" width="16" height="16" viewBox="0 0 16 16" shape-rendering="crispEdges"><g shape-rendering="auto"><rect x="0" y="0" width="15" height="16" rx="2.5" fill="#fff"/><path d="M8 .5h4.500a2 2 0 012 2v11a2 2 0 01-2 2H8z" fill="#109090"/><path d="M6 4.500a4 4 0 000 7.5" stroke="#109090" stroke-width="1.8" fill="none" /><path d="M9.5 4.500a4 4 0 010 7.5" stroke="#fff" stroke-width="1.8" fill="none" /></g></svg><svg style="left:1206px;top:1003px" width="16" height="16" viewBox="0 0 16 16" shape-rendering="crispEdges"><g shape-rendering="auto"><ellipse cx="8" cy="3.7" rx="2.1" ry="3.2" fill="#909090" stroke="#00a000" stroke-width="1" transform="rotate(0 8 8)"/><ellipse cx="8" cy="3.7" rx="2.1" ry="3.2" fill="#909090" stroke="#00a000" stroke-width="1" transform="rotate(45 8 8)"/><ellipse cx="8" cy="3.7" rx="2.1" ry="3.2" fill="#909090" stroke="#00a000" stroke-width="1" transform="rotate(90 8 8)"/><ellipse cx="8" cy="3.7" rx="2.1" ry="3.2" fill="#909090" stroke="#00a000" stroke-width="1" transform="rotate(135 8 8)"/><ellipse cx="8" cy="3.7" rx="2.1" ry="3.2" fill="#909090" stroke="#00a000" stroke-width="1" transform="rotate(180 8 8)"/><ellipse cx="8" cy="3.7" rx="2.1" ry="3.2" fill="#909090" stroke="#00a000" stroke-width="1" transform="rotate(225 8 8)"/><ellipse cx="8" cy="3.7" rx="2.1" ry="3.2" fill="#909090" stroke="#00a000" stroke-width="1" transform="rotate(315 8 8)"/><ellipse cx="8" cy="3.7" rx="2.1" ry="3.2" fill="#e01818" stroke="#a00000" stroke-width="1" transform="rotate(255 8 8)"/><circle cx="8" cy="8" r="1.800" fill="#ff0"/></g></svg><div class="t" style="left:1237px;top:1005px;font-size:11px;line-height:13px;height:13px;letter-spacing:0.070px;">11:14</div>
</body></html>
